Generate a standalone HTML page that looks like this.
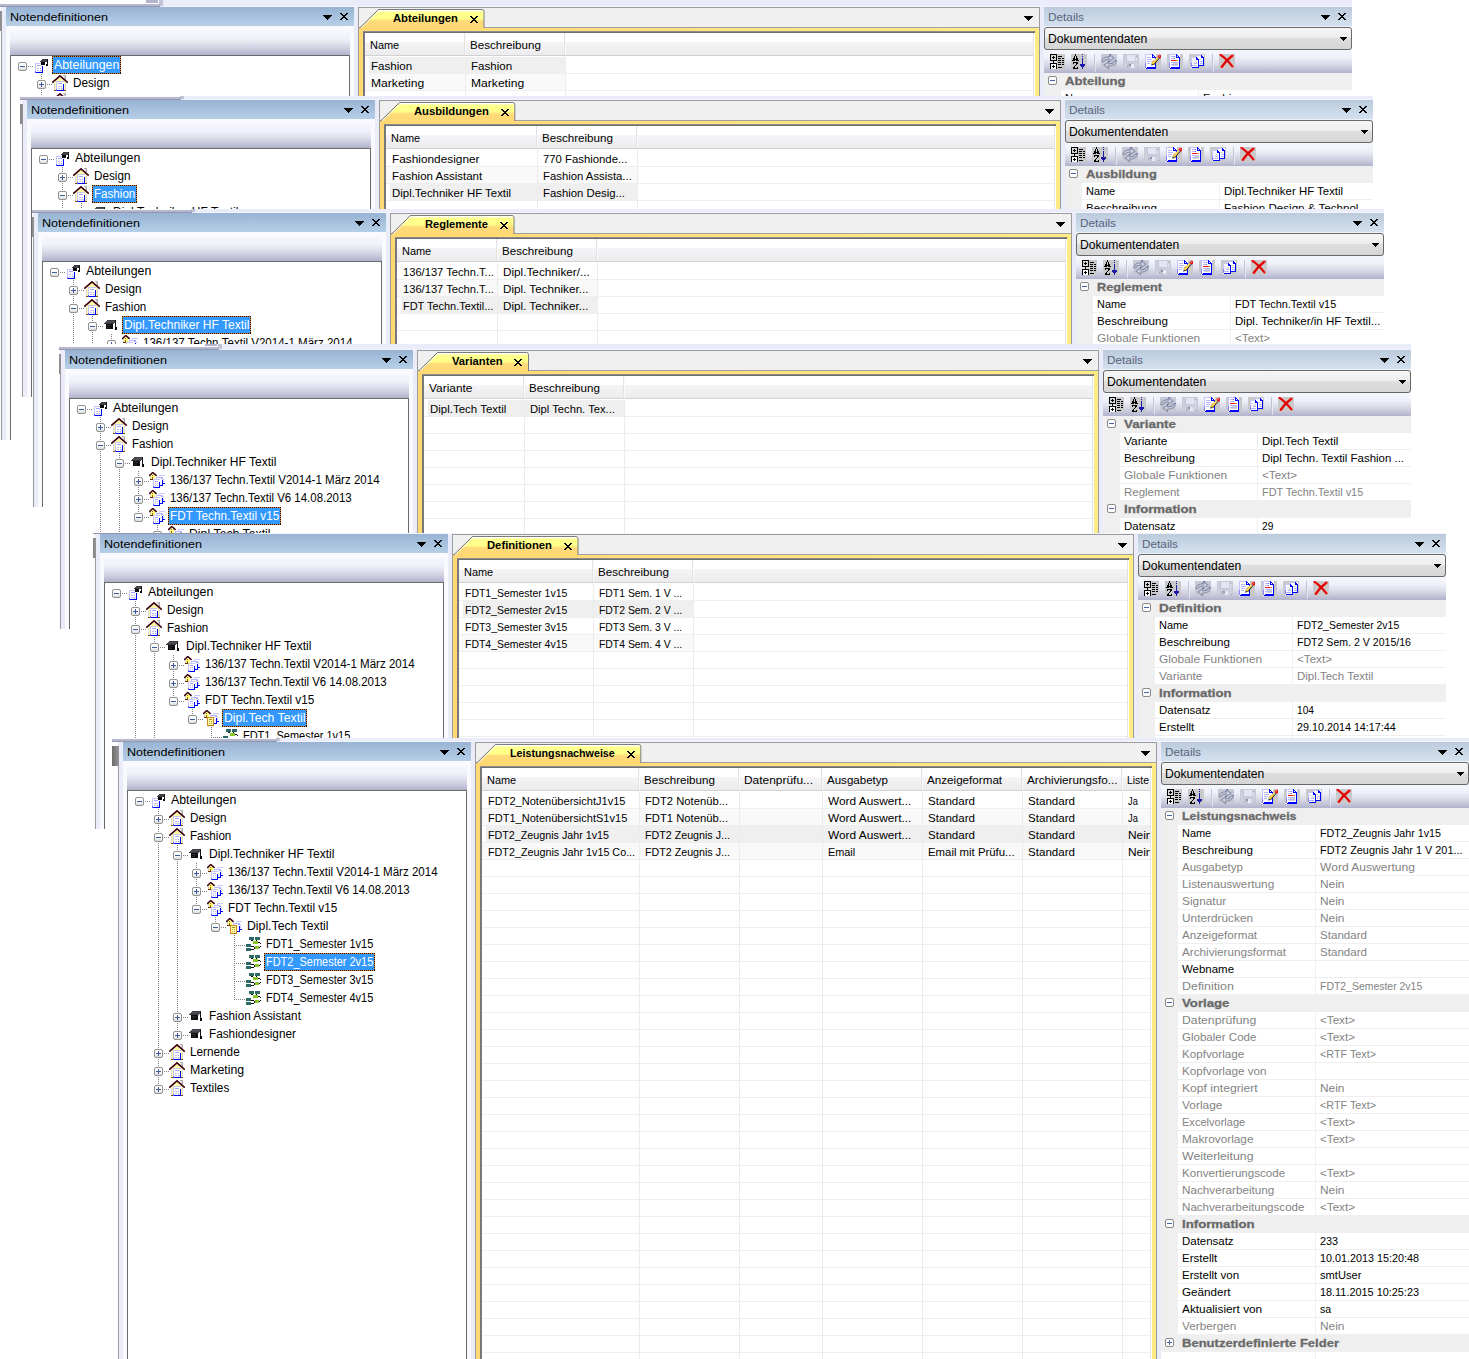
<!DOCTYPE html><html><head><meta charset="utf-8"><title>Notendefinitionen</title>
<style>
html,body{margin:0;padding:0;background:#fff}
body{width:1469px;height:1359px;position:relative;overflow:hidden;font-family:"Liberation Sans", sans-serif}
.win{position:absolute;overflow:hidden;background:#fff}
.org{position:absolute;width:0;height:0}
.org div,.org svg{position:absolute}
.t{white-space:pre;} .t span{display:inline-block;transform-origin:0 50%;position:static}
.tree{font-size:12px} .hdr{font-size:11px} .combo{font-size:12px}
.tab{font-size:11px;font-weight:bold} .grid{font-size:11px} .prop{font-size:11px}
.cat{font-size:11px;font-weight:bold;-webkit-text-stroke:0.3px #6c6c6c}
.i{overflow:visible}
.hd{background:repeating-linear-gradient(90deg,#808080 0 1px,transparent 1px 2px)}
.vd{background:repeating-linear-gradient(180deg,#808080 0 1px,transparent 1px 2px)}
.eb{width:9px;height:9px;box-sizing:border-box;border:1px solid #919191;border-radius:2px;background:linear-gradient(#fff 0,#fafafa 50%,#dcdcdc 100%)}
.eb2{width:9px;height:9px;box-sizing:border-box;border:1px solid #8a8a8a;border-radius:2px;background:#fdfdfd}
.sel{background:repeating-linear-gradient(90deg,#1a1208 0 1px,#e8801c 1px 2px) 0 0/100% 1px no-repeat,repeating-linear-gradient(90deg,#1a1208 0 1px,#e8801c 1px 2px) 0 100%/100% 1px no-repeat,repeating-linear-gradient(180deg,#1a1208 0 1px,#e8801c 1px 2px) 0 0/1px 100% no-repeat,repeating-linear-gradient(180deg,#1a1208 0 1px,#e8801c 1px 2px) 100% 0/1px 100% no-repeat,#3399ff}
</style></head><body>
<svg width="0" height="0" style="position:absolute"><defs><symbol id="ic_root" viewBox="0 0 16 16"><g shape-rendering="crispEdges"><rect x="1" y="6" width="8" height="10" fill="#ffffff"/><rect x="6" y="13" width="2" height="2" fill="#e4e4e0"/><rect x="5" y="14" width="3" height="1" fill="#e4e4e0"/><rect x="1" y="6" width="8" height="1" fill="#c6c6ff"/><rect x="1" y="6" width="1" height="10" fill="#c6c6ff"/><rect x="8" y="9" width="1" height="7" fill="#0000ff"/><rect x="2" y="15" width="7" height="1" fill="#0000ff"/><rect x="1" y="14" width="1" height="2" fill="#6060ff"/><rect x="3" y="8" width="4" height="1" fill="#a4a4ff"/><rect x="3" y="11" width="2" height="1" fill="#c0c0f8"/><rect x="6" y="11" width="1" height="1" fill="#a4a4ff"/><rect x="3" y="13" width="2" height="1" fill="#c0c0f8"/><rect x="6" y="13" width="1" height="1" fill="#a4a4ff"/><rect x="8" y="2" width="6" height="1" fill="#3a3c40"/><rect x="7" y="3" width="7" height="1" fill="#44484c"/><rect x="6" y="4" width="7" height="1" fill="#3a3c40"/><rect x="7" y="5" width="4" height="3" fill="#0c0c0c"/><rect x="13" y="2" width="1" height="7" fill="#141414"/><rect x="12" y="7" width="2" height="2" fill="#0c0c0c"/></g></symbol>
<symbol id="ic_house" viewBox="0 0 16 16"><g shape-rendering="crispEdges"><rect x="12" y="1" width="2" height="4" fill="#d2d2d2"/><rect x="11" y="0" width="3" height="1" fill="#b4b4b4"/><rect x="13" y="1" width="1" height="4" fill="#a8a8a8"/></g><path d="M2.5 7.5 L8 2 L13.5 7.5 V16 H2.5 Z" fill="#ffffa2"/><path d="M2.5 8 V15 M13.5 8 V15" stroke="#d8d8e4" stroke-width="1"/><g shape-rendering="crispEdges"><rect x="4" y="6" width="8" height="10" fill="#fff"/><rect x="9" y="13" width="2" height="2" fill="#e2e2de"/><rect x="4" y="6" width="8" height="1" fill="#c6c6ff"/><rect x="4" y="6" width="1" height="10" fill="#c6c6ff"/><rect x="11" y="9" width="1" height="7" fill="#0000ff"/><rect x="5" y="15" width="7" height="1" fill="#0000ff"/><rect x="4" y="14" width="1" height="2" fill="#6060ff"/><rect x="6" y="8" width="4" height="1" fill="#a4a4ff"/><rect x="6" y="11" width="2" height="1" fill="#c0c0f8"/><rect x="9" y="11" width="1" height="1" fill="#a4a4ff"/><rect x="6" y="13" width="2" height="1" fill="#c0c0f8"/><rect x="9" y="13" width="1" height="1" fill="#a4a4ff"/><rect x="2" y="15" width="2" height="1" fill="#8a4a08"/><rect x="12" y="15" width="2" height="1" fill="#8a4a08"/></g><path d="M0.2 7.7 L8 0.9 L15.8 7.7" stroke="#3c000c" stroke-width="1.7" fill="none"/></symbol>
<symbol id="ic_cap" viewBox="0 0 16 16"><g shape-rendering="crispEdges"><rect x="3" y="3" width="9" height="1" fill="#3c3e42"/><rect x="2" y="4" width="10" height="1" fill="#50545a"/><rect x="1" y="5" width="10" height="1" fill="#46484e"/><rect x="0" y="6" width="10" height="1" fill="#3a3c40"/><rect x="2" y="7" width="7" height="5" fill="#0e0e0e"/><rect x="3" y="8" width="4" height="1" fill="#2c2c2c"/><rect x="3" y="10" width="3" height="1" fill="#262626"/><rect x="11" y="3" width="1" height="10" fill="#161616"/><rect x="11" y="10" width="2" height="3" fill="#0c0c0c"/></g></symbol>
<symbol id="ic_regl" viewBox="0 0 16 16"><g shape-rendering="crispEdges"><rect x="10" y="3" width="6" height="1" fill="#c8c8ff"/><rect x="10" y="3" width="1" height="2" fill="#d4d4ff"/><rect x="7" y="5" width="7" height="1" fill="#b8b8ff"/><rect x="7" y="5" width="1" height="2" fill="#c8c8ff"/><rect x="12" y="6" width="2" height="1" fill="#a0a0ff"/><rect x="11" y="7" width="2" height="6" fill="#f4f4ff"/><rect x="13" y="8" width="1" height="6" fill="#0000ff"/><rect x="11" y="13" width="3" height="1" fill="#0000ff"/><rect x="13" y="11" width="3" height="1" fill="#0000ff"/><rect x="14" y="7" width="1" height="1" fill="#b0b0ff"/><rect x="14" y="9" width="1" height="1" fill="#b0b0ff"/><rect x="4" y="7" width="7" height="9" fill="#ffffff"/><rect x="4" y="7" width="7" height="1" fill="#c6c6ff"/><rect x="4" y="7" width="1" height="9" fill="#c6c6ff"/><rect x="10" y="10" width="1" height="6" fill="#0000ff"/><rect x="5" y="15" width="6" height="1" fill="#0000ff"/><rect x="4" y="14" width="1" height="2" fill="#6060ff"/><rect x="6" y="9" width="3" height="1" fill="#a4a4ff"/><rect x="6" y="11" width="1" height="1" fill="#b8b8ff"/><rect x="8" y="11" width="1" height="1" fill="#b8b8ff"/><rect x="6" y="13" width="1" height="1" fill="#b8b8ff"/><rect x="8" y="13" width="1" height="1" fill="#b8b8ff"/></g><path d="M2.5 3.5 L4 2 L5.5 3.5 V7 H2.5 Z" fill="#ffff70"/><g shape-rendering="crispEdges"><rect x="2" y="3" width="4" height="4" fill="#ffff78"/><rect x="1" y="3" width="1" height="4" fill="#d0d0d8"/><rect x="3" y="3" width="1" height="1" fill="#b05a10"/><rect x="3" y="5" width="1" height="2" fill="#b05a10"/><rect x="1" y="7" width="3" height="1" fill="#6a2a08"/></g><path d="M0.1 3.9 L3.75 0.5 L7.6 3.9" stroke="#3c000c" stroke-width="1.5" fill="none"/></symbol>
<symbol id="ic_vari" viewBox="0 0 16 16"><g shape-rendering="crispEdges"><rect x="10" y="3" width="6" height="1" fill="#c8c8ff"/><rect x="10" y="3" width="1" height="2" fill="#d4d4ff"/><rect x="7" y="5" width="7" height="1" fill="#b8b8ff"/><rect x="7" y="5" width="1" height="2" fill="#c8c8ff"/><rect x="12" y="6" width="2" height="1" fill="#a0a0ff"/><rect x="11" y="7" width="2" height="6" fill="#f4f4ff"/><rect x="13" y="8" width="1" height="6" fill="#0000ff"/><rect x="11" y="13" width="3" height="1" fill="#0000ff"/><rect x="13" y="11" width="3" height="1" fill="#0000ff"/><rect x="14" y="7" width="1" height="1" fill="#b0b0ff"/><rect x="14" y="9" width="1" height="1" fill="#b0b0ff"/><rect x="4" y="7" width="7" height="9" fill="#ffffa0"/><rect x="4" y="7" width="7" height="1" fill="#d88420"/><rect x="4" y="7" width="1" height="9" fill="#d88420"/><rect x="10" y="7" width="1" height="9" fill="#d88420"/><rect x="4" y="15" width="7" height="1" fill="#c87818"/><rect x="6" y="9" width="1" height="1" fill="#70c030"/><rect x="7" y="9" width="1" height="1" fill="#c06020"/><rect x="8" y="9" width="1" height="1" fill="#a8a030"/><rect x="6" y="11" width="1" height="1" fill="#b0a838"/><rect x="8" y="11" width="1" height="1" fill="#b09848"/><rect x="6" y="13" width="1" height="1" fill="#e8a070"/><rect x="8" y="13" width="1" height="1" fill="#70c838"/></g><path d="M2.5 3.5 L4 2 L5.5 3.5 V7 H2.5 Z" fill="#ffff70"/><g shape-rendering="crispEdges"><rect x="2" y="3" width="4" height="4" fill="#ffff78"/><rect x="1" y="3" width="1" height="4" fill="#d0d0d8"/><rect x="3" y="3" width="1" height="1" fill="#b05a10"/><rect x="3" y="5" width="1" height="2" fill="#b05a10"/><rect x="1" y="7" width="3" height="1" fill="#6a2a08"/></g><path d="M0.1 3.9 L3.75 0.5 L7.6 3.9" stroke="#3c000c" stroke-width="1.5" fill="none"/></symbol>
<symbol id="ic_defi" viewBox="0 0 16 16"><g shape-rendering="crispEdges"><rect x="3" y="1" width="5" height="3" fill="#2b6b60"/><rect x="9" y="1" width="5" height="3" fill="#2b6b60"/><rect x="5" y="1" width="1" height="1" fill="#2a5a90"/><rect x="11" y="1" width="1" height="1" fill="#2a5a90"/><rect x="7" y="5" width="5" height="3" fill="#86c626"/><rect x="5" y="4" width="2" height="1" fill="#0a0a0a"/><rect x="10" y="4" width="1" height="1" fill="#0a0a0a"/><rect x="12" y="6" width="2" height="1" fill="#0a0a0a"/><rect x="14" y="7" width="1" height="1" fill="#0a0a0a"/><rect x="0" y="8" width="5" height="3" fill="#2b6b60"/><rect x="2" y="8" width="1" height="1" fill="#2a5a90"/><rect x="0" y="12" width="5" height="3" fill="#2b6b60"/><rect x="2" y="12" width="1" height="1" fill="#2a5a90"/><rect x="9" y="10" width="4" height="3" fill="#86c626"/><rect x="5" y="10" width="3" height="1" fill="#0a0a0a"/><rect x="5" y="13" width="3" height="1" fill="#0a0a0a"/><rect x="8" y="11" width="1" height="2" fill="#0a0a0a"/><rect x="14" y="10" width="1" height="1" fill="#0a0a0a"/><rect x="13" y="11" width="1" height="1" fill="#0a0a0a"/></g></symbol>
<symbol id="ic_cat" viewBox="0 0 16 16"><g shape-rendering="crispEdges"><rect x="8" y="0" width="8" height="15" fill="#c9c9cb"/><rect x="1" y="0" width="7" height="1" fill="#000000"/><rect x="1" y="6" width="7" height="1" fill="#000000"/><rect x="1" y="0" width="1" height="7" fill="#000000"/><rect x="7" y="0" width="1" height="7" fill="#000000"/><rect x="2" y="1" width="5" height="5" fill="#d6d6d6"/><rect x="3" y="3" width="3" height="1" fill="#000000"/><rect x="4" y="2" width="1" height="3" fill="#000000"/><rect x="4" y="7" width="1" height="2" fill="#000000"/><rect x="0" y="7" width="4" height="1" fill="#e0e0e4"/><rect x="5" y="7" width="3" height="1" fill="#e0e0e4"/><rect x="1" y="9" width="7" height="1" fill="#000000"/><rect x="1" y="9" width="1" height="6" fill="#000000"/><rect x="7" y="9" width="1" height="6" fill="#000000"/><rect x="2" y="10" width="5" height="5" fill="#ffffff"/><rect x="3" y="12" width="3" height="1" fill="#000000"/><rect x="4" y="11" width="1" height="3" fill="#000000"/><rect x="9" y="2" width="4" height="1" fill="#000000"/><rect x="9" y="13" width="4" height="1" fill="#000000"/><rect x="9" y="4" width="3" height="1" fill="#000000"/><rect x="13" y="4" width="2" height="1" fill="#000000"/><rect x="9" y="6" width="3" height="1" fill="#000000"/><rect x="13" y="6" width="2" height="1" fill="#000000"/><rect x="9" y="8" width="3" height="1" fill="#000000"/><rect x="13" y="8" width="2" height="1" fill="#000000"/><rect x="9" y="10" width="3" height="1" fill="#000000"/><rect x="13" y="10" width="2" height="1" fill="#000000"/></g></symbol>
<symbol id="ic_az" viewBox="0 0 16 16"><g shape-rendering="crispEdges"><rect x="0" y="0" width="16" height="15" fill="#c9c9cb"/><rect x="4" y="0" width="1" height="1" fill="#000000"/><rect x="4" y="1" width="1" height="1" fill="#000000"/><rect x="3" y="2" width="1" height="1" fill="#000000"/><rect x="5" y="2" width="1" height="1" fill="#000000"/><rect x="3" y="3" width="1" height="1" fill="#000000"/><rect x="5" y="3" width="1" height="1" fill="#000000"/><rect x="2" y="4" width="1" height="1" fill="#000000"/><rect x="3" y="4" width="1" height="1" fill="#000000"/><rect x="5" y="4" width="1" height="1" fill="#000000"/><rect x="6" y="4" width="1" height="1" fill="#000000"/><rect x="2" y="5" width="1" height="1" fill="#000000"/><rect x="3" y="5" width="1" height="1" fill="#000000"/><rect x="4" y="5" width="1" height="1" fill="#000000"/><rect x="5" y="5" width="1" height="1" fill="#000000"/><rect x="6" y="5" width="1" height="1" fill="#000000"/><rect x="1" y="6" width="1" height="1" fill="#000000"/><rect x="2" y="6" width="1" height="1" fill="#000000"/><rect x="3" y="6" width="1" height="1" fill="#000000"/><rect x="5" y="6" width="1" height="1" fill="#000000"/><rect x="6" y="6" width="1" height="1" fill="#000000"/><rect x="7" y="6" width="1" height="1" fill="#000000"/><rect x="2" y="8" width="1" height="1" fill="#000000"/><rect x="3" y="8" width="1" height="1" fill="#000000"/><rect x="4" y="8" width="1" height="1" fill="#000000"/><rect x="5" y="8" width="1" height="1" fill="#000000"/><rect x="6" y="8" width="1" height="1" fill="#000000"/><rect x="2" y="9" width="1" height="1" fill="#000000"/><rect x="5" y="9" width="1" height="1" fill="#000000"/><rect x="6" y="9" width="1" height="1" fill="#000000"/><rect x="5" y="10" width="1" height="1" fill="#000000"/><rect x="4" y="11" width="1" height="1" fill="#000000"/><rect x="3" y="12" width="1" height="1" fill="#000000"/><rect x="2" y="13" width="1" height="1" fill="#000000"/><rect x="3" y="13" width="1" height="1" fill="#000000"/><rect x="6" y="13" width="1" height="1" fill="#000000"/><rect x="2" y="14" width="1" height="1" fill="#000000"/><rect x="3" y="14" width="1" height="1" fill="#000000"/><rect x="4" y="14" width="1" height="1" fill="#000000"/><rect x="5" y="14" width="1" height="1" fill="#000000"/><rect x="6" y="14" width="1" height="1" fill="#000000"/><rect x="11" y="0" width="1" height="1" fill="#1a1aa6"/><rect x="11" y="2" width="1" height="1" fill="#1a1aa6"/><rect x="11" y="4" width="1" height="10" fill="#1a1aa6"/><rect x="9" y="10" width="5" height="1" fill="#1a1aa6"/><rect x="9" y="11" width="5" height="1" fill="#1a1aa6"/><rect x="10" y="12" width="3" height="1" fill="#1a1aa6"/><rect x="11" y="13" width="1" height="2" fill="#1a1aa6"/></g></symbol>
<symbol id="ic_refresh" viewBox="0 0 16 16"><g shape-rendering="crispEdges"><rect x="0" y="0" width="16" height="15" fill="#c7c9d7"/></g><path d="M1 7.5 C1 4.2 4 2.8 8.5 2.9 L8.5 0.6 L13 4.2 L8.5 7.4 L8.5 5.2 C5.5 5 3.6 5.8 2.6 7.8 Z" fill="#cfd2e0" stroke="#9094aa" stroke-width="1.2"/><path d="M15 6.5 C15.2 10.4 12 12.2 7.5 12.1 L7.5 14.6 L3 11 L7.5 7.8 L7.5 9.9 C10.5 10 12.6 9.3 13.4 6.8 Z" fill="#cfd2e0" stroke="#9094aa" stroke-width="1.2"/><rect x="7" y="2" width="1" height="1" fill="#5a86c8"/><rect x="15" y="6" width="1" height="1" fill="#4a80d0"/><rect x="7" y="7" width="1" height="1" fill="#5050b0"/><rect x="10" y="9" width="1" height="1" fill="#5a86c8"/><rect x="9" y="0" width="1" height="1" fill="#5a52a8"/></symbol>
<symbol id="ic_save" viewBox="0 0 16 16"><g shape-rendering="crispEdges"><rect x="0" y="0" width="16" height="15" fill="#c7c9d7"/><rect x="1" y="1" width="14" height="13" fill="#cdcfdd"/><rect x="3" y="1" width="9" height="6" fill="#e3e5f2"/><rect x="3" y="1" width="1" height="6" fill="#c2c4d4"/><rect x="3" y="7" width="9" height="1" fill="#c4c6d6"/><rect x="13" y="2" width="1" height="1" fill="#9a9cb4"/><rect x="13" y="3" width="1" height="4" fill="#dfe1ee"/><rect x="4" y="9" width="7" height="5" fill="#c2c4d3"/><rect x="8" y="10" width="3" height="4" fill="#e8eaf4"/><rect x="6" y="10" width="2" height="2" fill="#8e90b0"/><rect x="4" y="12" width="1" height="1" fill="#9a9cb8"/><rect x="14" y="13" width="1" height="1" fill="#9698b4"/></g></symbol>
<symbol id="ic_edit" viewBox="0 0 16 16"><g shape-rendering="crispEdges"><rect x="9" y="0" width="7" height="15" fill="#c9c9cb"/><rect x="0" y="0" width="11" height="15" fill="#ffffff"/><rect x="0" y="0" width="8" height="1" fill="#c6c6ff"/><rect x="0" y="0" width="1" height="13" fill="#c6c6ff"/><rect x="0" y="9" width="1" height="5" fill="#8080ff"/><rect x="7" y="0" width="1" height="3" fill="#0000ff"/><rect x="8" y="1" width="1" height="3" fill="#0000ff"/><rect x="9" y="2" width="1" height="2" fill="#0000ff"/><rect x="10" y="3" width="1" height="12" fill="#0000ff"/><rect x="7" y="3" width="3" height="1" fill="#0000ff"/><rect x="8" y="2" width="1" height="1" fill="#ffffff"/><rect x="1" y="13" width="10" height="2" fill="#0000ff"/><rect x="1" y="13" width="1" height="1" fill="#ffffff"/><rect x="2" y="3" width="4" height="1" fill="#b4b4ff"/><rect x="2" y="5" width="5" height="1" fill="#b4b4ff"/><rect x="2" y="7" width="4" height="1" fill="#b4b4ff"/><rect x="2" y="9" width="3" height="1" fill="#b4b4ff"/></g><path d="M7.3 10.3 L14 2.6" stroke="#f0c030" stroke-width="2.6"/><path d="M7.6 9.2 L13.4 2.6" stroke="#fff8a0" stroke-width="1"/><path d="M8.6 11 L14.4 4" stroke="#181818" stroke-width="0.9"/><path d="M7 8.6 L8.2 7.4 M8 7.6 L9 6.4" stroke="#d08020" stroke-width="1"/><circle cx="14.6" cy="2.6" r="1.9" fill="#e81818"/><circle cx="14" cy="2" r="0.8" fill="#ff8080"/><path d="M12.6 3.6 L14 5" stroke="#4090e0" stroke-width="1"/><path d="M6 11.6 L6.8 9.6 L8.6 11 Z" fill="#222"/><rect x="6" y="10" width="1" height="1" fill="#50a0f0"/></symbol>
<symbol id="ic_doc" viewBox="0 0 16 16"><g shape-rendering="crispEdges"><rect x="0" y="0" width="16" height="15" fill="#c9c9cb"/><rect x="2" y="0" width="11" height="15" fill="#ffffff"/><rect x="2" y="0" width="8" height="1" fill="#c6c6ff"/><rect x="2" y="0" width="1" height="13" fill="#c6c6ff"/><rect x="2" y="9" width="1" height="5" fill="#8080ff"/><rect x="9" y="0" width="1" height="3" fill="#0000ff"/><rect x="10" y="1" width="1" height="3" fill="#0000ff"/><rect x="11" y="2" width="1" height="2" fill="#0000ff"/><rect x="12" y="3" width="1" height="12" fill="#0000ff"/><rect x="9" y="3" width="3" height="1" fill="#0000ff"/><rect x="10" y="2" width="1" height="1" fill="#ffffff"/><rect x="3" y="13" width="10" height="2" fill="#0000ff"/><rect x="3" y="13" width="1" height="1" fill="#ffffff"/><rect x="4" y="2" width="3" height="1" fill="#b4b4ff"/><rect x="7" y="2" width="1" height="1" fill="#7070f0"/><rect x="4" y="4" width="3" height="1" fill="#b4b4ff"/><rect x="7" y="4" width="1" height="1" fill="#7070f0"/><rect x="4" y="6" width="5" height="1" fill="#f01414"/><rect x="9" y="6" width="2" height="1" fill="#f08018"/><rect x="4" y="8" width="7" height="1" fill="#b4b4ff"/><rect x="6" y="9" width="5" height="1" fill="#d4d4d0"/><rect x="4" y="10" width="7" height="1" fill="#b4b4ff"/><rect x="5" y="11" width="6" height="1" fill="#d4d4d0"/></g></symbol>
<symbol id="ic_copy" viewBox="0 0 16 16"><g shape-rendering="crispEdges"><rect x="0" y="0" width="16" height="15" fill="#c9c9cb"/><rect x="7" y="1" width="8" height="11" fill="#ffffff"/><rect x="7" y="1" width="5" height="1" fill="#c6c6ff"/><rect x="7" y="1" width="1" height="6" fill="#c6c6ff"/><rect x="12" y="1" width="1" height="2" fill="#0000ff"/><rect x="13" y="2" width="1" height="2" fill="#0000ff"/><rect x="14" y="3" width="1" height="9" fill="#0000ff"/><rect x="12" y="3" width="2" height="1" fill="#0000ff"/><rect x="9" y="11" width="6" height="1" fill="#0000ff"/><rect x="10" y="5" width="3" height="1" fill="#dcdcc8"/><rect x="11" y="7" width="3" height="1" fill="#b4b4ff"/><rect x="11" y="9" width="3" height="1" fill="#b4b4ff"/><rect x="2" y="3" width="8" height="11" fill="#ffffff"/><rect x="2" y="3" width="6" height="1" fill="#c6c6ff"/><rect x="2" y="3" width="1" height="10" fill="#c6c6ff"/><rect x="2" y="9" width="1" height="4" fill="#8080ff"/><rect x="7" y="3" width="1" height="2" fill="#0000ff"/><rect x="8" y="4" width="1" height="2" fill="#0000ff"/><rect x="9" y="5" width="1" height="9" fill="#0000ff"/><rect x="7" y="5" width="2" height="1" fill="#0000ff"/><rect x="3" y="13" width="7" height="1" fill="#0000ff"/><rect x="3" y="6" width="3" height="1" fill="#e0e0ff"/><rect x="3" y="8" width="4" height="1" fill="#e0e0ff"/><rect x="5" y="9" width="3" height="1" fill="#b4b4ff"/><rect x="3" y="11" width="5" height="1" fill="#b4b4ff"/><rect x="6" y="7" width="2" height="2" fill="#e4e4d4"/></g></symbol>
<symbol id="ic_del" viewBox="0 0 16 16"><g shape-rendering="crispEdges"><rect x="0" y="0" width="16" height="15" fill="#c9c9cb"/></g><path d="M1.6 0.9 C5 3.2 9.5 7.5 13.4 12.4" stroke="#f40808" stroke-width="2.3" fill="none" stroke-linecap="round"/><path d="M13.3 1.8 C9.5 4.6 5.5 8.5 2.8 12.8" stroke="#f40808" stroke-width="2.5" fill="none" stroke-linecap="round"/><path d="M3 2 C6 4.5 9.5 8 12.6 11.6 M12.4 2.8 C9 5.5 5.8 8.6 3.4 12" stroke="#b80000" stroke-width="0.8" fill="none"/></symbol>
</defs></svg>
<div class="win" style="left:0px;top:0px;width:1352px;height:440px">
<div class="org" style="left:-1px;top:6px">
<div style="left:0px;top:-6px;width:1353px;height:440px;background:#ebecf9"></div>
<div style="left:0px;top:1px;width:2px;height:434px;background:#fbfbff"></div>
<div style="left:-4px;top:-6px;width:164px;height:4px;background:#fdfdfe"></div>
<div style="left:147px;top:-6px;width:12px;height:3px;background:#b3b4cb"></div>
<div style="left:160px;top:-6px;width:4px;height:6px;background:#c1c2d7"></div>
<div style="left:-4px;top:-2px;width:166px;height:2px;background:#b7b8cf"></div>
<div style="left:-4px;top:0px;width:165px;height:1px;background:#9597af"></div>
<div style="left:161px;top:-2px;width:3px;height:2px;background:#c1c2d7"></div>
<div style="left:165px;top:0px;width:1188px;height:1px;background:#f4f5fc"></div>
<div style="left:-4px;top:5px;width:7px;height:20px;background:linear-gradient(90deg,#6c6c6c,#969696)"></div>
<div style="left:2px;top:25px;width:1px;height:434px;background:#9c9c9c"></div>
<div style="left:7px;top:20px;width:348px;height:434px;background:#f9f9fe"></div>
<div style="left:7px;top:1px;width:348px;height:19px;background:linear-gradient(#98b3d3,#b6cfe8)"></div>
<div class="t hdr" style="left:10.9px;top:2px;height:19px;line-height:19px;color:#000;"><span style="transform:scaleX(1.1445)">Notendefinitionen</span></div>
<svg class="i" style="left:324px;top:9px" width="9" height="5" shape-rendering="crispEdges"><path fill="#000" d="M0 0h9v1h-9zM1 1h7v1h-7zM2 2h5v1h-5zM3 3h3v1h-3zM4 4h1v1h-1z"/></svg>
<svg class="i" style="left:341px;top:7px" width="8" height="7" shape-rendering="crispEdges"><path fill="#000" d="M0 0h2v1h-2zM6 0h2v1h-2zM1 1h2v1h-2zM5 1h2v1h-2zM2 2h4v1h-4zM3 3h2v1h-2zM2 4h4v1h-4zM1 5h2v1h-2zM5 5h2v1h-2zM0 6h2v1h-2zM6 6h2v1h-2z"/></svg>
<div style="left:11px;top:25px;width:340px;height:24px;background:linear-gradient(#f4f6fc 0,#f0f2fa 30%,#e1e2ee 52%,#cfd0e0 72%,#b1b2cc 100%)"></div>
<div style="left:11px;top:49px;width:340px;height:434px;background:#fff;border:1px solid #6a6a6a;box-sizing:border-box"></div>
<div class="hd" style="left:29px;top:60px;width:6px;height:1px;"></div>
<div class="eb" style="left:19px;top:56px"><div style="left:1px;top:3px;width:5px;height:1px;background:#3c5a9e"></div></div>
<svg class="i" style="left:35px;top:51px" width="16" height="16"><use href="#ic_root"/></svg>
<div class="sel" style="left:53px;top:50px;width:69px;height:18px;"></div>
<div class="t tree" style="left:54.6px;top:50px;height:18px;line-height:18px;color:#fff;"><span style="transform:scaleX(1.0301)">Abteilungen</span></div>
<div class="hd" style="left:48px;top:78px;width:5px;height:1px;"></div>
<div class="vd" style="left:42px;top:68px;width:1px;height:5px;"></div>
<div class="eb" style="left:38px;top:74px"><div style="left:1px;top:3px;width:5px;height:1px;background:#3c5a9e"></div><div style="left:3px;top:1px;width:1px;height:5px;background:#3c5a9e"></div></div>
<svg class="i" style="left:53px;top:69px" width="16" height="16"><use href="#ic_house"/></svg>
<div class="t tree" style="left:73.6px;top:68px;height:18px;line-height:18px;color:#000;"><span style="transform:scaleX(0.977)">Design</span></div>
<div class="hd" style="left:48px;top:96px;width:5px;height:1px;"></div>
<div class="vd" style="left:42px;top:84px;width:1px;height:7px;"></div>
<div class="eb" style="left:38px;top:92px"><div style="left:1px;top:3px;width:5px;height:1px;background:#3c5a9e"></div></div>
<svg class="i" style="left:53px;top:87px" width="16" height="16"><use href="#ic_house"/></svg>
<div class="t tree" style="left:73.6px;top:86px;height:18px;line-height:18px;color:#000;"><span style="transform:scaleX(0.9671)">Fashion</span></div>
<div class="vd" style="left:42px;top:102px;width:1px;height:42px;"></div>
<div class="vd" style="left:61px;top:104px;width:1px;height:40px;"></div>
<div style="left:359px;top:1px;width:682px;height:434px;background:#f0f0f0;border:1px solid #9c9c9c;border-bottom:0;box-sizing:border-box"></div>
<div style="left:360px;top:21px;width:680px;height:1px;background:#a0a0a0"></div>
<div style="left:360px;top:22px;width:680px;height:434px;background:linear-gradient(90deg,#ffd873,#ffe27c 50%,#ffeb84)"></div>
<svg class="i" style="left:360px;top:2px" width="127" height="21"><defs><linearGradient id="tg" x1="0" y1="0" x2="0" y2="1"><stop offset="0.07" stop-color="#ffffff"/><stop offset="0.12" stop-color="#ffff8e"/><stop offset="0.46" stop-color="#ffff8a"/><stop offset="0.53" stop-color="#ffea80"/><stop offset="0.60" stop-color="#ffda79"/><stop offset="1" stop-color="#ffd873"/></linearGradient></defs><path d="M0.5 20.5 L19.5 1.5 H123.0 Q125.0 1.5 125.0 3.5 V21 H0.5 Z" fill="url(#tg)"/><path d="M1.9 20 L20.3 2.6" stroke="#fff" stroke-width="0.9" fill="none"/><path d="M19.5 1.5 H123.0 Q125.0 1.5 125.0 3.5 V20" stroke="#7c7c7c" stroke-width="1" fill="none"/><path d="M0.6 20.1 L19.6 1.4" stroke="#505050" stroke-width="0.8" fill="none"/></svg>
<div class="t tab" style="left:394px;top:4px;height:17px;line-height:17px;color:#000;"><span style="transform:scaleX(1.0226)">Abteilungen</span></div>
<svg class="i" style="left:471px;top:10px" width="8" height="7" shape-rendering="crispEdges"><path fill="#000" d="M0 0h2v1h-2zM6 0h2v1h-2zM1 1h2v1h-2zM5 1h2v1h-2zM2 2h4v1h-4zM3 3h2v1h-2zM2 4h4v1h-4zM1 5h2v1h-2zM5 5h2v1h-2zM0 6h2v1h-2zM6 6h2v1h-2z"/></svg>
<svg class="i" style="left:1025px;top:10px" width="9" height="5" shape-rendering="crispEdges"><path fill="#000" d="M0 0h9v1h-9zM1 1h7v1h-7zM2 2h5v1h-5zM3 3h3v1h-3zM4 4h1v1h-1z"/></svg>
<div style="left:364px;top:25px;width:672px;height:434px;background:#fff;border-left:2px solid #787878;border-top:2px solid #6e6e6e;box-sizing:border-box"></div>
<div style="left:364px;top:25px;width:671px;height:1px;background:#8c8c8c"></div>
<div style="left:1034px;top:27px;width:1px;height:434px;background:#e2e2e2"></div>
<div style="left:366px;top:27px;width:668px;height:9px;background:#fff"></div>
<div style="left:366px;top:36px;width:668px;height:13px;background:linear-gradient(#f5f5f7,#ececef)"></div>
<div style="left:366px;top:49px;width:668px;height:1px;background:#d2d2d2"></div>
<div style="left:366px;top:67px;width:668px;height:1px;background:#efefef"></div>
<div style="left:366px;top:84px;width:668px;height:1px;background:#efefef"></div>
<div style="left:366px;top:101px;width:668px;height:1px;background:#efefef"></div>
<div style="left:366px;top:118px;width:668px;height:1px;background:#efefef"></div>
<div style="left:366px;top:135px;width:668px;height:1px;background:#efefef"></div>
<div style="left:366px;top:152px;width:668px;height:1px;background:#efefef"></div>
<div style="left:366px;top:169px;width:668px;height:1px;background:#efefef"></div>
<div style="left:366px;top:186px;width:668px;height:1px;background:#efefef"></div>
<div style="left:366px;top:203px;width:668px;height:1px;background:#efefef"></div>
<div style="left:366px;top:220px;width:668px;height:1px;background:#efefef"></div>
<div style="left:366px;top:237px;width:668px;height:1px;background:#efefef"></div>
<div style="left:366px;top:254px;width:668px;height:1px;background:#efefef"></div>
<div style="left:366px;top:271px;width:668px;height:1px;background:#efefef"></div>
<div style="left:366px;top:288px;width:668px;height:1px;background:#efefef"></div>
<div style="left:366px;top:305px;width:668px;height:1px;background:#efefef"></div>
<div style="left:366px;top:322px;width:668px;height:1px;background:#efefef"></div>
<div style="left:366px;top:339px;width:668px;height:1px;background:#efefef"></div>
<div style="left:366px;top:356px;width:668px;height:1px;background:#efefef"></div>
<div style="left:366px;top:373px;width:668px;height:1px;background:#efefef"></div>
<div style="left:366px;top:390px;width:668px;height:1px;background:#efefef"></div>
<div style="left:366px;top:407px;width:668px;height:1px;background:#efefef"></div>
<div style="left:366px;top:424px;width:668px;height:1px;background:#efefef"></div>
<div style="left:366px;top:441px;width:668px;height:1px;background:#efefef"></div>
<div style="left:370px;top:51px;width:197px;height:16px;background:#efefef"></div>
<div style="left:366px;top:68px;width:201px;height:16px;background:#f9f9f9"></div>
<div style="left:465px;top:27px;width:1px;height:22px;background:#e3e3e6"></div>
<div style="left:466px;top:27px;width:1px;height:22px;background:#fbfbfd"></div>
<div style="left:466px;top:51px;width:1px;height:434px;background:#ececec"></div>
<div style="left:565px;top:27px;width:1px;height:22px;background:#e3e3e6"></div>
<div style="left:566px;top:27px;width:1px;height:22px;background:#fbfbfd"></div>
<div style="left:566px;top:51px;width:1px;height:434px;background:#ececec"></div>
<div class="t grid" style="left:370.5px;top:31px;height:16px;line-height:16px;color:#000;width:95px;overflow:hidden;"><span style="transform:scaleX(0.9951)">Name</span></div>
<div class="t grid" style="left:371.5px;top:52px;height:16px;line-height:16px;color:#000;width:94px;overflow:hidden;"><span style="transform:scaleX(1.0526)">Fashion</span></div>
<div class="t grid" style="left:371.5px;top:69px;height:16px;line-height:16px;color:#000;width:94px;overflow:hidden;"><span style="transform:scaleX(1.0995)">Marketing</span></div>
<div class="t grid" style="left:470.5px;top:31px;height:16px;line-height:16px;color:#000;width:95px;overflow:hidden;"><span style="transform:scaleX(1.0538)">Beschreibung</span></div>
<div class="t grid" style="left:471.5px;top:52px;height:16px;line-height:16px;color:#000;width:94px;overflow:hidden;"><span style="transform:scaleX(1.0526)">Fashion</span></div>
<div class="t grid" style="left:471.5px;top:69px;height:16px;line-height:16px;color:#000;width:94px;overflow:hidden;"><span style="transform:scaleX(1.0995)">Marketing</span></div>
<div style="left:1045px;top:1px;width:308px;height:19px;background:linear-gradient(#bccbdc,#d3e1ef)"></div>
<div class="t hdr" style="left:1048.5px;top:2px;height:19px;line-height:19px;color:#58647c;"><span style="transform:scaleX(1.0706)">Details</span></div>
<svg class="i" style="left:1322px;top:9px" width="9" height="5" shape-rendering="crispEdges"><path fill="#000" d="M0 0h9v1h-9zM1 1h7v1h-7zM2 2h5v1h-5zM3 3h3v1h-3zM4 4h1v1h-1z"/></svg>
<svg class="i" style="left:1339px;top:7px" width="8" height="7" shape-rendering="crispEdges"><path fill="#000" d="M0 0h2v1h-2zM6 0h2v1h-2zM1 1h2v1h-2zM5 1h2v1h-2zM2 2h4v1h-4zM3 3h2v1h-2zM2 4h4v1h-4zM1 5h2v1h-2zM5 5h2v1h-2zM0 6h2v1h-2zM6 6h2v1h-2z"/></svg>
<div style="left:1045px;top:20px;width:308px;height:1px;background:#eef1f8"></div>
<div style="left:1045px;top:21px;width:308px;height:23px;background:linear-gradient(#f6f6f6 0,#eeeeee 45%,#dedede 50%,#d6d6d6 100%);border:1px solid #686868;border-radius:3px;box-sizing:border-box"></div>
<div class="t combo" style="left:1048.5px;top:23px;height:21px;line-height:21px;color:#000;"><span style="transform:scaleX(1.0125)">Dokumentendaten</span></div>
<svg class="i" style="left:1341px;top:31px" width="7" height="4" shape-rendering="crispEdges"><path fill="#000" d="M0 0h7v1h-7zM1 1h5v1h-5zM2 2h3v1h-3zM3 3h1v1h-1z"/></svg>
<div style="left:1045px;top:44px;width:308px;height:23px;background:linear-gradient(#f5f6fc 0,#f0f2fa 30%,#e1e2ee 52%,#cfd0e0 72%,#b1b2cc 100%)"></div>
<svg class="i" style="left:1050px;top:48px" width="16" height="16"><use href="#ic_cat"/></svg>
<svg class="i" style="left:1072px;top:48px" width="16" height="16"><use href="#ic_az"/></svg>
<svg class="i" style="left:1102px;top:48px" width="16" height="16"><use href="#ic_refresh"/></svg>
<svg class="i" style="left:1124px;top:48px" width="16" height="16"><use href="#ic_save"/></svg>
<svg class="i" style="left:1146px;top:48px" width="16" height="16"><use href="#ic_edit"/></svg>
<svg class="i" style="left:1168px;top:48px" width="16" height="16"><use href="#ic_doc"/></svg>
<svg class="i" style="left:1190px;top:48px" width="16" height="16"><use href="#ic_copy"/></svg>
<svg class="i" style="left:1220px;top:48px" width="16" height="16"><use href="#ic_del"/></svg>
<div style="left:1095px;top:48px;width:1px;height:17px;background:#c4c5d2"></div>
<div style="left:1096px;top:49px;width:1px;height:17px;background:#f4f4fa;opacity:.6"></div>
<div style="left:1213px;top:48px;width:1px;height:17px;background:#c4c5d2"></div>
<div style="left:1214px;top:49px;width:1px;height:17px;background:#f4f4fa;opacity:.6"></div>
<div style="left:1045px;top:67px;width:308px;height:434px;background:#fff"></div>
<div style="left:1045px;top:67px;width:17px;height:34px;background:#efefef"></div>
<div style="left:1045px;top:67px;width:308px;height:17px;background:#efefef"></div>
<div class="eb2" style="left:1049px;top:70px"><div style="left:1px;top:3px;width:5px;height:1px;background:#4a62a8"></div></div>
<div class="t cat" style="left:1066px;top:67px;height:17px;line-height:17px;color:#686868;"><span style="transform:scaleX(1.1948)">Abteilung</span></div>
<div style="left:1062px;top:100px;width:291px;height:1px;background:#efefef"></div>
<div style="left:1199px;top:84px;width:1px;height:17px;background:#efefef"></div>
<div class="t prop" style="left:1066.2px;top:84px;height:16px;line-height:16px;color:#000;"><span style="transform:scaleX(0.9951)">Name</span></div>
<div class="t prop" style="left:1204px;top:84px;height:16px;line-height:16px;color:#000;width:149px;overflow:hidden;"><span style="transform:scaleX(1.0526)">Fashion</span></div>
</div></div>
<div class="win" style="left:20px;top:96px;width:1353px;height:301px">
<div class="org" style="left:0px;top:3px">
<div style="left:0px;top:-3px;width:1353px;height:301px;background:#ebecf9"></div>
<div style="left:0px;top:1px;width:2px;height:298px;background:#fbfbff"></div>
<div style="left:-4px;top:-3px;width:164px;height:1px;background:#fdfdfe"></div>
<div style="left:160px;top:-3px;width:4px;height:3px;background:#c1c2d7"></div>
<div style="left:-4px;top:-2px;width:166px;height:2px;background:#b7b8cf"></div>
<div style="left:-4px;top:0px;width:165px;height:1px;background:#9597af"></div>
<div style="left:161px;top:-2px;width:3px;height:2px;background:#c1c2d7"></div>
<div style="left:165px;top:0px;width:1188px;height:1px;background:#f4f5fc"></div>
<div style="left:-4px;top:5px;width:7px;height:20px;background:linear-gradient(90deg,#6c6c6c,#969696)"></div>
<div style="left:2px;top:25px;width:1px;height:298px;background:#9c9c9c"></div>
<div style="left:7px;top:20px;width:348px;height:298px;background:#f9f9fe"></div>
<div style="left:7px;top:1px;width:348px;height:19px;background:linear-gradient(#98b3d3,#b6cfe8)"></div>
<div class="t hdr" style="left:10.9px;top:2px;height:19px;line-height:19px;color:#000;"><span style="transform:scaleX(1.1445)">Notendefinitionen</span></div>
<svg class="i" style="left:324px;top:9px" width="9" height="5" shape-rendering="crispEdges"><path fill="#000" d="M0 0h9v1h-9zM1 1h7v1h-7zM2 2h5v1h-5zM3 3h3v1h-3zM4 4h1v1h-1z"/></svg>
<svg class="i" style="left:341px;top:7px" width="8" height="7" shape-rendering="crispEdges"><path fill="#000" d="M0 0h2v1h-2zM6 0h2v1h-2zM1 1h2v1h-2zM5 1h2v1h-2zM2 2h4v1h-4zM3 3h2v1h-2zM2 4h4v1h-4zM1 5h2v1h-2zM5 5h2v1h-2zM0 6h2v1h-2zM6 6h2v1h-2z"/></svg>
<div style="left:11px;top:25px;width:340px;height:24px;background:linear-gradient(#f4f6fc 0,#f0f2fa 30%,#e1e2ee 52%,#cfd0e0 72%,#b1b2cc 100%)"></div>
<div style="left:11px;top:49px;width:340px;height:298px;background:#fff;border:1px solid #6a6a6a;box-sizing:border-box"></div>
<div class="hd" style="left:29px;top:60px;width:6px;height:1px;"></div>
<div class="eb" style="left:19px;top:56px"><div style="left:1px;top:3px;width:5px;height:1px;background:#3c5a9e"></div></div>
<svg class="i" style="left:35px;top:51px" width="16" height="16"><use href="#ic_root"/></svg>
<div class="t tree" style="left:54.6px;top:50px;height:18px;line-height:18px;color:#000;"><span style="transform:scaleX(1.0301)">Abteilungen</span></div>
<div class="hd" style="left:48px;top:78px;width:5px;height:1px;"></div>
<div class="vd" style="left:42px;top:68px;width:1px;height:5px;"></div>
<div class="eb" style="left:38px;top:74px"><div style="left:1px;top:3px;width:5px;height:1px;background:#3c5a9e"></div><div style="left:3px;top:1px;width:1px;height:5px;background:#3c5a9e"></div></div>
<svg class="i" style="left:53px;top:69px" width="16" height="16"><use href="#ic_house"/></svg>
<div class="t tree" style="left:73.6px;top:68px;height:18px;line-height:18px;color:#000;"><span style="transform:scaleX(0.977)">Design</span></div>
<div class="hd" style="left:48px;top:96px;width:5px;height:1px;"></div>
<div class="vd" style="left:42px;top:84px;width:1px;height:7px;"></div>
<div class="eb" style="left:38px;top:92px"><div style="left:1px;top:3px;width:5px;height:1px;background:#3c5a9e"></div></div>
<svg class="i" style="left:53px;top:87px" width="16" height="16"><use href="#ic_house"/></svg>
<div class="sel" style="left:72px;top:86px;width:45px;height:18px;"></div>
<div class="t tree" style="left:73.6px;top:86px;height:18px;line-height:18px;color:#fff;"><span style="transform:scaleX(0.9671)">Fashion</span></div>
<div class="hd" style="left:67px;top:114px;width:6px;height:1px;"></div>
<div class="vd" style="left:61px;top:104px;width:1px;height:5px;"></div>
<div class="eb" style="left:57px;top:110px"><div style="left:1px;top:3px;width:5px;height:1px;background:#3c5a9e"></div></div>
<svg class="i" style="left:73px;top:105px" width="16" height="16"><use href="#ic_cap"/></svg>
<div class="t tree" style="left:92.6px;top:104px;height:18px;line-height:18px;color:#000;"><span style="transform:scaleX(1.0019)">Dipl.Techniker HF Textil</span></div>
<div class="vd" style="left:42px;top:102px;width:1px;height:60px;"></div>
<div class="vd" style="left:61px;top:120px;width:1px;height:42px;"></div>
<div class="vd" style="left:80px;top:122px;width:1px;height:40px;"></div>
<div style="left:359px;top:1px;width:682px;height:298px;background:#f0f0f0;border:1px solid #9c9c9c;border-bottom:0;box-sizing:border-box"></div>
<div style="left:360px;top:21px;width:680px;height:1px;background:#a0a0a0"></div>
<div style="left:360px;top:22px;width:680px;height:298px;background:linear-gradient(90deg,#ffd873,#ffe27c 50%,#ffeb84)"></div>
<svg class="i" style="left:360px;top:2px" width="137" height="21"><defs><linearGradient id="tg" x1="0" y1="0" x2="0" y2="1"><stop offset="0.07" stop-color="#ffffff"/><stop offset="0.12" stop-color="#ffff8e"/><stop offset="0.46" stop-color="#ffff8a"/><stop offset="0.53" stop-color="#ffea80"/><stop offset="0.60" stop-color="#ffda79"/><stop offset="1" stop-color="#ffd873"/></linearGradient></defs><path d="M0.5 20.5 L19.5 1.5 H132.8 Q134.8 1.5 134.8 3.5 V21 H0.5 Z" fill="url(#tg)"/><path d="M1.9 20 L20.3 2.6" stroke="#fff" stroke-width="0.9" fill="none"/><path d="M19.5 1.5 H132.8 Q134.8 1.5 134.8 3.5 V20" stroke="#7c7c7c" stroke-width="1" fill="none"/><path d="M0.6 20.1 L19.6 1.4" stroke="#505050" stroke-width="0.8" fill="none"/></svg>
<div class="t tab" style="left:394px;top:4px;height:17px;line-height:17px;color:#000;"><span style="transform:scaleX(1.0201)">Ausbildungen</span></div>
<svg class="i" style="left:481px;top:10px" width="8" height="7" shape-rendering="crispEdges"><path fill="#000" d="M0 0h2v1h-2zM6 0h2v1h-2zM1 1h2v1h-2zM5 1h2v1h-2zM2 2h4v1h-4zM3 3h2v1h-2zM2 4h4v1h-4zM1 5h2v1h-2zM5 5h2v1h-2zM0 6h2v1h-2zM6 6h2v1h-2z"/></svg>
<svg class="i" style="left:1025px;top:10px" width="9" height="5" shape-rendering="crispEdges"><path fill="#000" d="M0 0h9v1h-9zM1 1h7v1h-7zM2 2h5v1h-5zM3 3h3v1h-3zM4 4h1v1h-1z"/></svg>
<div style="left:364px;top:25px;width:672px;height:298px;background:#fff;border-left:2px solid #787878;border-top:2px solid #6e6e6e;box-sizing:border-box"></div>
<div style="left:364px;top:25px;width:671px;height:1px;background:#8c8c8c"></div>
<div style="left:1034px;top:27px;width:1px;height:298px;background:#e2e2e2"></div>
<div style="left:366px;top:27px;width:668px;height:9px;background:#fff"></div>
<div style="left:366px;top:36px;width:668px;height:13px;background:linear-gradient(#f5f5f7,#ececef)"></div>
<div style="left:366px;top:49px;width:668px;height:1px;background:#d2d2d2"></div>
<div style="left:366px;top:67px;width:668px;height:1px;background:#efefef"></div>
<div style="left:366px;top:84px;width:668px;height:1px;background:#efefef"></div>
<div style="left:366px;top:101px;width:668px;height:1px;background:#efefef"></div>
<div style="left:366px;top:118px;width:668px;height:1px;background:#efefef"></div>
<div style="left:366px;top:135px;width:668px;height:1px;background:#efefef"></div>
<div style="left:366px;top:152px;width:668px;height:1px;background:#efefef"></div>
<div style="left:366px;top:169px;width:668px;height:1px;background:#efefef"></div>
<div style="left:366px;top:186px;width:668px;height:1px;background:#efefef"></div>
<div style="left:366px;top:203px;width:668px;height:1px;background:#efefef"></div>
<div style="left:366px;top:220px;width:668px;height:1px;background:#efefef"></div>
<div style="left:366px;top:237px;width:668px;height:1px;background:#efefef"></div>
<div style="left:366px;top:254px;width:668px;height:1px;background:#efefef"></div>
<div style="left:366px;top:271px;width:668px;height:1px;background:#efefef"></div>
<div style="left:366px;top:288px;width:668px;height:1px;background:#efefef"></div>
<div style="left:366px;top:305px;width:668px;height:1px;background:#efefef"></div>
<div style="left:366px;top:68px;width:252px;height:16px;background:#f9f9f9"></div>
<div style="left:370px;top:85px;width:248px;height:16px;background:#efefef"></div>
<div style="left:516px;top:27px;width:1px;height:22px;background:#e3e3e6"></div>
<div style="left:517px;top:27px;width:1px;height:22px;background:#fbfbfd"></div>
<div style="left:517px;top:51px;width:1px;height:298px;background:#ececec"></div>
<div style="left:616px;top:27px;width:1px;height:22px;background:#e3e3e6"></div>
<div style="left:617px;top:27px;width:1px;height:22px;background:#fbfbfd"></div>
<div style="left:617px;top:51px;width:1px;height:298px;background:#ececec"></div>
<div class="t grid" style="left:370.5px;top:31px;height:16px;line-height:16px;color:#000;width:146px;overflow:hidden;"><span style="transform:scaleX(0.9951)">Name</span></div>
<div class="t grid" style="left:371.5px;top:52px;height:16px;line-height:16px;color:#000;width:145px;overflow:hidden;"><span style="transform:scaleX(1.0757)">Fashiondesigner</span></div>
<div class="t grid" style="left:371.5px;top:69px;height:16px;line-height:16px;color:#000;width:145px;overflow:hidden;"><span style="transform:scaleX(1.0462)">Fashion Assistant</span></div>
<div class="t grid" style="left:371.5px;top:86px;height:16px;line-height:16px;color:#000;width:145px;overflow:hidden;"><span style="transform:scaleX(1.038)">Dipl.Techniker HF Textil</span></div>
<div class="t grid" style="left:521.5px;top:31px;height:16px;line-height:16px;color:#000;width:95px;overflow:hidden;"><span style="transform:scaleX(1.0538)">Beschreibung</span></div>
<div class="t grid" style="left:522.5px;top:52px;height:16px;line-height:16px;color:#000;width:94px;overflow:hidden;"><span style="transform:scaleX(1.0299)">770 Fashionde...</span></div>
<div class="t grid" style="left:522.5px;top:69px;height:16px;line-height:16px;color:#000;width:94px;overflow:hidden;"><span style="transform:scaleX(1.0299)">Fashion Assista...</span></div>
<div class="t grid" style="left:522.5px;top:86px;height:16px;line-height:16px;color:#000;width:94px;overflow:hidden;"><span style="transform:scaleX(1.0316)">Fashion Desig...</span></div>
<div style="left:1045px;top:1px;width:308px;height:19px;background:linear-gradient(#bccbdc,#d3e1ef)"></div>
<div class="t hdr" style="left:1048.5px;top:2px;height:19px;line-height:19px;color:#58647c;"><span style="transform:scaleX(1.0706)">Details</span></div>
<svg class="i" style="left:1322px;top:9px" width="9" height="5" shape-rendering="crispEdges"><path fill="#000" d="M0 0h9v1h-9zM1 1h7v1h-7zM2 2h5v1h-5zM3 3h3v1h-3zM4 4h1v1h-1z"/></svg>
<svg class="i" style="left:1339px;top:7px" width="8" height="7" shape-rendering="crispEdges"><path fill="#000" d="M0 0h2v1h-2zM6 0h2v1h-2zM1 1h2v1h-2zM5 1h2v1h-2zM2 2h4v1h-4zM3 3h2v1h-2zM2 4h4v1h-4zM1 5h2v1h-2zM5 5h2v1h-2zM0 6h2v1h-2zM6 6h2v1h-2z"/></svg>
<div style="left:1045px;top:20px;width:308px;height:1px;background:#eef1f8"></div>
<div style="left:1045px;top:21px;width:308px;height:23px;background:linear-gradient(#f6f6f6 0,#eeeeee 45%,#dedede 50%,#d6d6d6 100%);border:1px solid #686868;border-radius:3px;box-sizing:border-box"></div>
<div class="t combo" style="left:1048.5px;top:23px;height:21px;line-height:21px;color:#000;"><span style="transform:scaleX(1.0125)">Dokumentendaten</span></div>
<svg class="i" style="left:1341px;top:31px" width="7" height="4" shape-rendering="crispEdges"><path fill="#000" d="M0 0h7v1h-7zM1 1h5v1h-5zM2 2h3v1h-3zM3 3h1v1h-1z"/></svg>
<div style="left:1045px;top:44px;width:308px;height:23px;background:linear-gradient(#f5f6fc 0,#f0f2fa 30%,#e1e2ee 52%,#cfd0e0 72%,#b1b2cc 100%)"></div>
<svg class="i" style="left:1050px;top:48px" width="16" height="16"><use href="#ic_cat"/></svg>
<svg class="i" style="left:1072px;top:48px" width="16" height="16"><use href="#ic_az"/></svg>
<svg class="i" style="left:1102px;top:48px" width="16" height="16"><use href="#ic_refresh"/></svg>
<svg class="i" style="left:1124px;top:48px" width="16" height="16"><use href="#ic_save"/></svg>
<svg class="i" style="left:1146px;top:48px" width="16" height="16"><use href="#ic_edit"/></svg>
<svg class="i" style="left:1168px;top:48px" width="16" height="16"><use href="#ic_doc"/></svg>
<svg class="i" style="left:1190px;top:48px" width="16" height="16"><use href="#ic_copy"/></svg>
<svg class="i" style="left:1220px;top:48px" width="16" height="16"><use href="#ic_del"/></svg>
<div style="left:1095px;top:48px;width:1px;height:17px;background:#c4c5d2"></div>
<div style="left:1096px;top:49px;width:1px;height:17px;background:#f4f4fa;opacity:.6"></div>
<div style="left:1213px;top:48px;width:1px;height:17px;background:#c4c5d2"></div>
<div style="left:1214px;top:49px;width:1px;height:17px;background:#f4f4fa;opacity:.6"></div>
<div style="left:1045px;top:67px;width:308px;height:298px;background:#fff"></div>
<div style="left:1045px;top:67px;width:17px;height:51px;background:#efefef"></div>
<div style="left:1045px;top:67px;width:308px;height:17px;background:#efefef"></div>
<div class="eb2" style="left:1049px;top:70px"><div style="left:1px;top:3px;width:5px;height:1px;background:#4a62a8"></div></div>
<div class="t cat" style="left:1066px;top:67px;height:17px;line-height:17px;color:#686868;"><span style="transform:scaleX(1.1702)">Ausbildung</span></div>
<div style="left:1062px;top:100px;width:291px;height:1px;background:#efefef"></div>
<div style="left:1199px;top:84px;width:1px;height:17px;background:#efefef"></div>
<div class="t prop" style="left:1066.2px;top:84px;height:16px;line-height:16px;color:#000;"><span style="transform:scaleX(0.9951)">Name</span></div>
<div class="t prop" style="left:1204px;top:84px;height:16px;line-height:16px;color:#000;width:149px;overflow:hidden;"><span style="transform:scaleX(1.038)">Dipl.Techniker HF Textil</span></div>
<div style="left:1062px;top:117px;width:291px;height:1px;background:#efefef"></div>
<div style="left:1199px;top:101px;width:1px;height:17px;background:#efefef"></div>
<div class="t prop" style="left:1066.2px;top:101px;height:16px;line-height:16px;color:#000;"><span style="transform:scaleX(1.0538)">Beschreibung</span></div>
<div class="t prop" style="left:1204px;top:101px;height:16px;line-height:16px;color:#000;width:149px;overflow:hidden;"><span style="transform:scaleX(1.0537)">Fashion Design &amp; Technol</span></div>
</div></div>
<div class="win" style="left:32px;top:209px;width:1352px;height:298px">
<div class="org" style="left:-1px;top:3px">
<div style="left:0px;top:-3px;width:1353px;height:298px;background:#ebecf9"></div>
<div style="left:0px;top:1px;width:2px;height:295px;background:#fbfbff"></div>
<div style="left:-4px;top:-3px;width:164px;height:1px;background:#fdfdfe"></div>
<div style="left:160px;top:-3px;width:4px;height:3px;background:#c1c2d7"></div>
<div style="left:-4px;top:-2px;width:166px;height:2px;background:#b7b8cf"></div>
<div style="left:-4px;top:0px;width:165px;height:1px;background:#9597af"></div>
<div style="left:161px;top:-2px;width:3px;height:2px;background:#c1c2d7"></div>
<div style="left:165px;top:0px;width:1188px;height:1px;background:#f4f5fc"></div>
<div style="left:-4px;top:5px;width:7px;height:20px;background:linear-gradient(90deg,#6c6c6c,#969696)"></div>
<div style="left:2px;top:25px;width:1px;height:295px;background:#9c9c9c"></div>
<div style="left:7px;top:20px;width:348px;height:295px;background:#f9f9fe"></div>
<div style="left:7px;top:1px;width:348px;height:19px;background:linear-gradient(#98b3d3,#b6cfe8)"></div>
<div class="t hdr" style="left:10.9px;top:2px;height:19px;line-height:19px;color:#000;"><span style="transform:scaleX(1.1445)">Notendefinitionen</span></div>
<svg class="i" style="left:324px;top:9px" width="9" height="5" shape-rendering="crispEdges"><path fill="#000" d="M0 0h9v1h-9zM1 1h7v1h-7zM2 2h5v1h-5zM3 3h3v1h-3zM4 4h1v1h-1z"/></svg>
<svg class="i" style="left:341px;top:7px" width="8" height="7" shape-rendering="crispEdges"><path fill="#000" d="M0 0h2v1h-2zM6 0h2v1h-2zM1 1h2v1h-2zM5 1h2v1h-2zM2 2h4v1h-4zM3 3h2v1h-2zM2 4h4v1h-4zM1 5h2v1h-2zM5 5h2v1h-2zM0 6h2v1h-2zM6 6h2v1h-2z"/></svg>
<div style="left:11px;top:25px;width:340px;height:24px;background:linear-gradient(#f4f6fc 0,#f0f2fa 30%,#e1e2ee 52%,#cfd0e0 72%,#b1b2cc 100%)"></div>
<div style="left:11px;top:49px;width:340px;height:295px;background:#fff;border:1px solid #6a6a6a;box-sizing:border-box"></div>
<div class="hd" style="left:29px;top:60px;width:6px;height:1px;"></div>
<div class="eb" style="left:19px;top:56px"><div style="left:1px;top:3px;width:5px;height:1px;background:#3c5a9e"></div></div>
<svg class="i" style="left:35px;top:51px" width="16" height="16"><use href="#ic_root"/></svg>
<div class="t tree" style="left:54.6px;top:50px;height:18px;line-height:18px;color:#000;"><span style="transform:scaleX(1.0301)">Abteilungen</span></div>
<div class="hd" style="left:48px;top:78px;width:5px;height:1px;"></div>
<div class="vd" style="left:42px;top:68px;width:1px;height:5px;"></div>
<div class="eb" style="left:38px;top:74px"><div style="left:1px;top:3px;width:5px;height:1px;background:#3c5a9e"></div><div style="left:3px;top:1px;width:1px;height:5px;background:#3c5a9e"></div></div>
<svg class="i" style="left:53px;top:69px" width="16" height="16"><use href="#ic_house"/></svg>
<div class="t tree" style="left:73.6px;top:68px;height:18px;line-height:18px;color:#000;"><span style="transform:scaleX(0.977)">Design</span></div>
<div class="hd" style="left:48px;top:96px;width:5px;height:1px;"></div>
<div class="vd" style="left:42px;top:84px;width:1px;height:7px;"></div>
<div class="eb" style="left:38px;top:92px"><div style="left:1px;top:3px;width:5px;height:1px;background:#3c5a9e"></div></div>
<svg class="i" style="left:53px;top:87px" width="16" height="16"><use href="#ic_house"/></svg>
<div class="t tree" style="left:73.6px;top:86px;height:18px;line-height:18px;color:#000;"><span style="transform:scaleX(0.9671)">Fashion</span></div>
<div class="hd" style="left:67px;top:114px;width:6px;height:1px;"></div>
<div class="vd" style="left:61px;top:104px;width:1px;height:5px;"></div>
<div class="eb" style="left:57px;top:110px"><div style="left:1px;top:3px;width:5px;height:1px;background:#3c5a9e"></div></div>
<svg class="i" style="left:73px;top:105px" width="16" height="16"><use href="#ic_cap"/></svg>
<div class="sel" style="left:91px;top:104px;width:129px;height:18px;"></div>
<div class="t tree" style="left:92.6px;top:104px;height:18px;line-height:18px;color:#fff;"><span style="transform:scaleX(1.0019)">Dipl.Techniker HF Textil</span></div>
<div class="hd" style="left:86px;top:132px;width:5px;height:1px;"></div>
<div class="vd" style="left:80px;top:122px;width:1px;height:5px;"></div>
<div class="eb" style="left:76px;top:128px"><div style="left:1px;top:3px;width:5px;height:1px;background:#3c5a9e"></div><div style="left:3px;top:1px;width:1px;height:5px;background:#3c5a9e"></div></div>
<svg class="i" style="left:91px;top:123px" width="16" height="16"><use href="#ic_regl"/></svg>
<div class="t tree" style="left:111.6px;top:122px;height:18px;line-height:18px;color:#000;"><span style="transform:scaleX(0.9618)">136/137 Techn.Textil V2014-1 März 2014</span></div>
<div class="vd" style="left:42px;top:102px;width:1px;height:78px;"></div>
<div class="vd" style="left:61px;top:120px;width:1px;height:60px;"></div>
<div class="vd" style="left:80px;top:138px;width:1px;height:42px;"></div>
<div style="left:359px;top:1px;width:682px;height:295px;background:#f0f0f0;border:1px solid #9c9c9c;border-bottom:0;box-sizing:border-box"></div>
<div style="left:360px;top:21px;width:680px;height:1px;background:#a0a0a0"></div>
<div style="left:360px;top:22px;width:680px;height:295px;background:linear-gradient(90deg,#ffd873,#ffe27c 50%,#ffeb84)"></div>
<svg class="i" style="left:360px;top:2px" width="125" height="21"><defs><linearGradient id="tg" x1="0" y1="0" x2="0" y2="1"><stop offset="0.07" stop-color="#ffffff"/><stop offset="0.12" stop-color="#ffff8e"/><stop offset="0.46" stop-color="#ffff8a"/><stop offset="0.53" stop-color="#ffea80"/><stop offset="0.60" stop-color="#ffda79"/><stop offset="1" stop-color="#ffd873"/></linearGradient></defs><path d="M0.5 20.5 L19.5 1.5 H121.0 Q123.0 1.5 123.0 3.5 V21 H0.5 Z" fill="url(#tg)"/><path d="M1.9 20 L20.3 2.6" stroke="#fff" stroke-width="0.9" fill="none"/><path d="M19.5 1.5 H121.0 Q123.0 1.5 123.0 3.5 V20" stroke="#7c7c7c" stroke-width="1" fill="none"/><path d="M0.6 20.1 L19.6 1.4" stroke="#505050" stroke-width="0.8" fill="none"/></svg>
<div class="t tab" style="left:394px;top:4px;height:17px;line-height:17px;color:#000;"><span style="transform:scaleX(1.0103)">Reglemente</span></div>
<svg class="i" style="left:469px;top:10px" width="8" height="7" shape-rendering="crispEdges"><path fill="#000" d="M0 0h2v1h-2zM6 0h2v1h-2zM1 1h2v1h-2zM5 1h2v1h-2zM2 2h4v1h-4zM3 3h2v1h-2zM2 4h4v1h-4zM1 5h2v1h-2zM5 5h2v1h-2zM0 6h2v1h-2zM6 6h2v1h-2z"/></svg>
<svg class="i" style="left:1025px;top:10px" width="9" height="5" shape-rendering="crispEdges"><path fill="#000" d="M0 0h9v1h-9zM1 1h7v1h-7zM2 2h5v1h-5zM3 3h3v1h-3zM4 4h1v1h-1z"/></svg>
<div style="left:364px;top:25px;width:672px;height:295px;background:#fff;border-left:2px solid #787878;border-top:2px solid #6e6e6e;box-sizing:border-box"></div>
<div style="left:364px;top:25px;width:671px;height:1px;background:#8c8c8c"></div>
<div style="left:1034px;top:27px;width:1px;height:295px;background:#e2e2e2"></div>
<div style="left:366px;top:27px;width:668px;height:9px;background:#fff"></div>
<div style="left:366px;top:36px;width:668px;height:13px;background:linear-gradient(#f5f5f7,#ececef)"></div>
<div style="left:366px;top:49px;width:668px;height:1px;background:#d2d2d2"></div>
<div style="left:366px;top:67px;width:668px;height:1px;background:#efefef"></div>
<div style="left:366px;top:84px;width:668px;height:1px;background:#efefef"></div>
<div style="left:366px;top:101px;width:668px;height:1px;background:#efefef"></div>
<div style="left:366px;top:118px;width:668px;height:1px;background:#efefef"></div>
<div style="left:366px;top:135px;width:668px;height:1px;background:#efefef"></div>
<div style="left:366px;top:152px;width:668px;height:1px;background:#efefef"></div>
<div style="left:366px;top:169px;width:668px;height:1px;background:#efefef"></div>
<div style="left:366px;top:186px;width:668px;height:1px;background:#efefef"></div>
<div style="left:366px;top:203px;width:668px;height:1px;background:#efefef"></div>
<div style="left:366px;top:220px;width:668px;height:1px;background:#efefef"></div>
<div style="left:366px;top:237px;width:668px;height:1px;background:#efefef"></div>
<div style="left:366px;top:254px;width:668px;height:1px;background:#efefef"></div>
<div style="left:366px;top:271px;width:668px;height:1px;background:#efefef"></div>
<div style="left:366px;top:288px;width:668px;height:1px;background:#efefef"></div>
<div style="left:366px;top:305px;width:668px;height:1px;background:#efefef"></div>
<div style="left:366px;top:68px;width:201px;height:16px;background:#f9f9f9"></div>
<div style="left:370px;top:85px;width:197px;height:16px;background:#efefef"></div>
<div style="left:465px;top:27px;width:1px;height:22px;background:#e3e3e6"></div>
<div style="left:466px;top:27px;width:1px;height:22px;background:#fbfbfd"></div>
<div style="left:466px;top:51px;width:1px;height:295px;background:#ececec"></div>
<div style="left:565px;top:27px;width:1px;height:22px;background:#e3e3e6"></div>
<div style="left:566px;top:27px;width:1px;height:22px;background:#fbfbfd"></div>
<div style="left:566px;top:51px;width:1px;height:295px;background:#ececec"></div>
<div class="t grid" style="left:370.5px;top:31px;height:16px;line-height:16px;color:#000;width:95px;overflow:hidden;"><span style="transform:scaleX(0.9951)">Name</span></div>
<div class="t grid" style="left:371.5px;top:52px;height:16px;line-height:16px;color:#000;width:94px;overflow:hidden;"><span style="transform:scaleX(1.0133)">136/137 Techn.T...</span></div>
<div class="t grid" style="left:371.5px;top:69px;height:16px;line-height:16px;color:#000;width:94px;overflow:hidden;"><span style="transform:scaleX(1.0133)">136/137 Techn.T...</span></div>
<div class="t grid" style="left:371.5px;top:86px;height:16px;line-height:16px;color:#000;width:94px;overflow:hidden;"><span style="transform:scaleX(0.9957)">FDT Techn.Textil...</span></div>
<div class="t grid" style="left:470.5px;top:31px;height:16px;line-height:16px;color:#000;width:95px;overflow:hidden;"><span style="transform:scaleX(1.0538)">Beschreibung</span></div>
<div class="t grid" style="left:471.5px;top:52px;height:16px;line-height:16px;color:#000;width:94px;overflow:hidden;"><span style="transform:scaleX(1.0675)">Dipl.Techniker/...</span></div>
<div class="t grid" style="left:471.5px;top:69px;height:16px;line-height:16px;color:#000;width:94px;overflow:hidden;"><span style="transform:scaleX(1.0607)">Dipl. Techniker...</span></div>
<div class="t grid" style="left:471.5px;top:86px;height:16px;line-height:16px;color:#000;width:94px;overflow:hidden;"><span style="transform:scaleX(1.0607)">Dipl. Techniker...</span></div>
<div style="left:1045px;top:1px;width:308px;height:19px;background:linear-gradient(#bccbdc,#d3e1ef)"></div>
<div class="t hdr" style="left:1048.5px;top:2px;height:19px;line-height:19px;color:#58647c;"><span style="transform:scaleX(1.0706)">Details</span></div>
<svg class="i" style="left:1322px;top:9px" width="9" height="5" shape-rendering="crispEdges"><path fill="#000" d="M0 0h9v1h-9zM1 1h7v1h-7zM2 2h5v1h-5zM3 3h3v1h-3zM4 4h1v1h-1z"/></svg>
<svg class="i" style="left:1339px;top:7px" width="8" height="7" shape-rendering="crispEdges"><path fill="#000" d="M0 0h2v1h-2zM6 0h2v1h-2zM1 1h2v1h-2zM5 1h2v1h-2zM2 2h4v1h-4zM3 3h2v1h-2zM2 4h4v1h-4zM1 5h2v1h-2zM5 5h2v1h-2zM0 6h2v1h-2zM6 6h2v1h-2z"/></svg>
<div style="left:1045px;top:20px;width:308px;height:1px;background:#eef1f8"></div>
<div style="left:1045px;top:21px;width:308px;height:23px;background:linear-gradient(#f6f6f6 0,#eeeeee 45%,#dedede 50%,#d6d6d6 100%);border:1px solid #686868;border-radius:3px;box-sizing:border-box"></div>
<div class="t combo" style="left:1048.5px;top:23px;height:21px;line-height:21px;color:#000;"><span style="transform:scaleX(1.0125)">Dokumentendaten</span></div>
<svg class="i" style="left:1341px;top:31px" width="7" height="4" shape-rendering="crispEdges"><path fill="#000" d="M0 0h7v1h-7zM1 1h5v1h-5zM2 2h3v1h-3zM3 3h1v1h-1z"/></svg>
<div style="left:1045px;top:44px;width:308px;height:23px;background:linear-gradient(#f5f6fc 0,#f0f2fa 30%,#e1e2ee 52%,#cfd0e0 72%,#b1b2cc 100%)"></div>
<svg class="i" style="left:1050px;top:48px" width="16" height="16"><use href="#ic_cat"/></svg>
<svg class="i" style="left:1072px;top:48px" width="16" height="16"><use href="#ic_az"/></svg>
<svg class="i" style="left:1102px;top:48px" width="16" height="16"><use href="#ic_refresh"/></svg>
<svg class="i" style="left:1124px;top:48px" width="16" height="16"><use href="#ic_save"/></svg>
<svg class="i" style="left:1146px;top:48px" width="16" height="16"><use href="#ic_edit"/></svg>
<svg class="i" style="left:1168px;top:48px" width="16" height="16"><use href="#ic_doc"/></svg>
<svg class="i" style="left:1190px;top:48px" width="16" height="16"><use href="#ic_copy"/></svg>
<svg class="i" style="left:1220px;top:48px" width="16" height="16"><use href="#ic_del"/></svg>
<div style="left:1095px;top:48px;width:1px;height:17px;background:#c4c5d2"></div>
<div style="left:1096px;top:49px;width:1px;height:17px;background:#f4f4fa;opacity:.6"></div>
<div style="left:1213px;top:48px;width:1px;height:17px;background:#c4c5d2"></div>
<div style="left:1214px;top:49px;width:1px;height:17px;background:#f4f4fa;opacity:.6"></div>
<div style="left:1045px;top:67px;width:308px;height:295px;background:#fff"></div>
<div style="left:1045px;top:67px;width:17px;height:68px;background:#efefef"></div>
<div style="left:1045px;top:67px;width:308px;height:17px;background:#efefef"></div>
<div class="eb2" style="left:1049px;top:70px"><div style="left:1px;top:3px;width:5px;height:1px;background:#4a62a8"></div></div>
<div class="t cat" style="left:1066px;top:67px;height:17px;line-height:17px;color:#686868;"><span style="transform:scaleX(1.1556)">Reglement</span></div>
<div style="left:1062px;top:100px;width:291px;height:1px;background:#efefef"></div>
<div style="left:1199px;top:84px;width:1px;height:17px;background:#efefef"></div>
<div class="t prop" style="left:1066.2px;top:84px;height:16px;line-height:16px;color:#000;"><span style="transform:scaleX(0.9951)">Name</span></div>
<div class="t prop" style="left:1204px;top:84px;height:16px;line-height:16px;color:#000;width:149px;overflow:hidden;"><span style="transform:scaleX(0.9891)">FDT Techn.Textil v15</span></div>
<div style="left:1062px;top:117px;width:291px;height:1px;background:#efefef"></div>
<div style="left:1199px;top:101px;width:1px;height:17px;background:#efefef"></div>
<div class="t prop" style="left:1066.2px;top:101px;height:16px;line-height:16px;color:#000;"><span style="transform:scaleX(1.0538)">Beschreibung</span></div>
<div class="t prop" style="left:1204px;top:101px;height:16px;line-height:16px;color:#000;width:149px;overflow:hidden;"><span style="transform:scaleX(1.0508)">Dipl. Techniker/in HF Textil...</span></div>
<div style="left:1062px;top:134px;width:291px;height:1px;background:#efefef"></div>
<div style="left:1199px;top:118px;width:1px;height:17px;background:#efefef"></div>
<div class="t prop" style="left:1066.2px;top:118px;height:16px;line-height:16px;color:#838383;"><span style="transform:scaleX(1.0817)">Globale Funktionen</span></div>
<div class="t prop" style="left:1204px;top:118px;height:16px;line-height:16px;color:#838383;width:149px;overflow:hidden;"><span style="transform:scaleX(1.0596)">&lt;Text&gt;</span></div>
</div></div>
<div class="win" style="left:59px;top:344px;width:1352px;height:285px">
<div class="org" style="left:-1px;top:5px">
<div style="left:0px;top:-5px;width:1353px;height:285px;background:#ebecf9"></div>
<div style="left:0px;top:1px;width:2px;height:280px;background:#fbfbff"></div>
<div style="left:-4px;top:-5px;width:164px;height:3px;background:#fdfdfe"></div>
<div style="left:147px;top:-5px;width:12px;height:2px;background:#b3b4cb"></div>
<div style="left:160px;top:-5px;width:4px;height:5px;background:#c1c2d7"></div>
<div style="left:-4px;top:-2px;width:166px;height:2px;background:#b7b8cf"></div>
<div style="left:-4px;top:0px;width:165px;height:1px;background:#9597af"></div>
<div style="left:161px;top:-2px;width:3px;height:2px;background:#c1c2d7"></div>
<div style="left:165px;top:0px;width:1188px;height:1px;background:#f4f5fc"></div>
<div style="left:-4px;top:5px;width:7px;height:20px;background:linear-gradient(90deg,#6c6c6c,#969696)"></div>
<div style="left:2px;top:25px;width:1px;height:280px;background:#9c9c9c"></div>
<div style="left:7px;top:20px;width:348px;height:280px;background:#f9f9fe"></div>
<div style="left:7px;top:1px;width:348px;height:19px;background:linear-gradient(#98b3d3,#b6cfe8)"></div>
<div class="t hdr" style="left:10.9px;top:2px;height:19px;line-height:19px;color:#000;"><span style="transform:scaleX(1.1445)">Notendefinitionen</span></div>
<svg class="i" style="left:324px;top:9px" width="9" height="5" shape-rendering="crispEdges"><path fill="#000" d="M0 0h9v1h-9zM1 1h7v1h-7zM2 2h5v1h-5zM3 3h3v1h-3zM4 4h1v1h-1z"/></svg>
<svg class="i" style="left:341px;top:7px" width="8" height="7" shape-rendering="crispEdges"><path fill="#000" d="M0 0h2v1h-2zM6 0h2v1h-2zM1 1h2v1h-2zM5 1h2v1h-2zM2 2h4v1h-4zM3 3h2v1h-2zM2 4h4v1h-4zM1 5h2v1h-2zM5 5h2v1h-2zM0 6h2v1h-2zM6 6h2v1h-2z"/></svg>
<div style="left:11px;top:25px;width:340px;height:24px;background:linear-gradient(#f4f6fc 0,#f0f2fa 30%,#e1e2ee 52%,#cfd0e0 72%,#b1b2cc 100%)"></div>
<div style="left:11px;top:49px;width:340px;height:280px;background:#fff;border:1px solid #6a6a6a;box-sizing:border-box"></div>
<div class="hd" style="left:29px;top:60px;width:6px;height:1px;"></div>
<div class="eb" style="left:19px;top:56px"><div style="left:1px;top:3px;width:5px;height:1px;background:#3c5a9e"></div></div>
<svg class="i" style="left:35px;top:51px" width="16" height="16"><use href="#ic_root"/></svg>
<div class="t tree" style="left:54.6px;top:50px;height:18px;line-height:18px;color:#000;"><span style="transform:scaleX(1.0301)">Abteilungen</span></div>
<div class="hd" style="left:48px;top:78px;width:5px;height:1px;"></div>
<div class="vd" style="left:42px;top:68px;width:1px;height:5px;"></div>
<div class="eb" style="left:38px;top:74px"><div style="left:1px;top:3px;width:5px;height:1px;background:#3c5a9e"></div><div style="left:3px;top:1px;width:1px;height:5px;background:#3c5a9e"></div></div>
<svg class="i" style="left:53px;top:69px" width="16" height="16"><use href="#ic_house"/></svg>
<div class="t tree" style="left:73.6px;top:68px;height:18px;line-height:18px;color:#000;"><span style="transform:scaleX(0.977)">Design</span></div>
<div class="hd" style="left:48px;top:96px;width:5px;height:1px;"></div>
<div class="vd" style="left:42px;top:84px;width:1px;height:7px;"></div>
<div class="eb" style="left:38px;top:92px"><div style="left:1px;top:3px;width:5px;height:1px;background:#3c5a9e"></div></div>
<svg class="i" style="left:53px;top:87px" width="16" height="16"><use href="#ic_house"/></svg>
<div class="t tree" style="left:73.6px;top:86px;height:18px;line-height:18px;color:#000;"><span style="transform:scaleX(0.9671)">Fashion</span></div>
<div class="hd" style="left:67px;top:114px;width:6px;height:1px;"></div>
<div class="vd" style="left:61px;top:104px;width:1px;height:5px;"></div>
<div class="eb" style="left:57px;top:110px"><div style="left:1px;top:3px;width:5px;height:1px;background:#3c5a9e"></div></div>
<svg class="i" style="left:73px;top:105px" width="16" height="16"><use href="#ic_cap"/></svg>
<div class="t tree" style="left:92.6px;top:104px;height:18px;line-height:18px;color:#000;"><span style="transform:scaleX(1.0019)">Dipl.Techniker HF Textil</span></div>
<div class="hd" style="left:86px;top:132px;width:5px;height:1px;"></div>
<div class="vd" style="left:80px;top:122px;width:1px;height:5px;"></div>
<div class="eb" style="left:76px;top:128px"><div style="left:1px;top:3px;width:5px;height:1px;background:#3c5a9e"></div><div style="left:3px;top:1px;width:1px;height:5px;background:#3c5a9e"></div></div>
<svg class="i" style="left:91px;top:123px" width="16" height="16"><use href="#ic_regl"/></svg>
<div class="t tree" style="left:111.6px;top:122px;height:18px;line-height:18px;color:#000;"><span style="transform:scaleX(0.9618)">136/137 Techn.Textil V2014-1 März 2014</span></div>
<div class="hd" style="left:86px;top:150px;width:5px;height:1px;"></div>
<div class="vd" style="left:80px;top:138px;width:1px;height:7px;"></div>
<div class="eb" style="left:76px;top:146px"><div style="left:1px;top:3px;width:5px;height:1px;background:#3c5a9e"></div><div style="left:3px;top:1px;width:1px;height:5px;background:#3c5a9e"></div></div>
<svg class="i" style="left:91px;top:141px" width="16" height="16"><use href="#ic_regl"/></svg>
<div class="t tree" style="left:111.6px;top:140px;height:18px;line-height:18px;color:#000;"><span style="transform:scaleX(0.9528)">136/137 Techn.Textil V6 14.08.2013</span></div>
<div class="hd" style="left:86px;top:168px;width:5px;height:1px;"></div>
<div class="vd" style="left:80px;top:156px;width:1px;height:7px;"></div>
<div class="eb" style="left:76px;top:164px"><div style="left:1px;top:3px;width:5px;height:1px;background:#3c5a9e"></div></div>
<svg class="i" style="left:91px;top:159px" width="16" height="16"><use href="#ic_regl"/></svg>
<div class="sel" style="left:110px;top:158px;width:113px;height:18px;"></div>
<div class="t tree" style="left:111.6px;top:158px;height:18px;line-height:18px;color:#fff;"><span style="transform:scaleX(0.9784)">FDT Techn.Textil v15</span></div>
<div class="hd" style="left:105px;top:186px;width:5px;height:1px;"></div>
<div class="vd" style="left:99px;top:176px;width:1px;height:5px;"></div>
<div class="eb" style="left:95px;top:182px"><div style="left:1px;top:3px;width:5px;height:1px;background:#3c5a9e"></div></div>
<svg class="i" style="left:110px;top:177px" width="16" height="16"><use href="#ic_vari"/></svg>
<div class="t tree" style="left:130.6px;top:176px;height:18px;line-height:18px;color:#000;"><span style="transform:scaleX(1.0211)">Dipl.Tech Textil</span></div>
<div class="vd" style="left:42px;top:102px;width:1px;height:132px;"></div>
<div class="vd" style="left:61px;top:120px;width:1px;height:114px;"></div>
<div class="vd" style="left:118px;top:194px;width:1px;height:40px;"></div>
<div style="left:359px;top:1px;width:682px;height:280px;background:#f0f0f0;border:1px solid #9c9c9c;border-bottom:0;box-sizing:border-box"></div>
<div style="left:360px;top:21px;width:680px;height:1px;background:#a0a0a0"></div>
<div style="left:360px;top:22px;width:680px;height:280px;background:linear-gradient(90deg,#ffd873,#ffe27c 50%,#ffeb84)"></div>
<svg class="i" style="left:360px;top:2px" width="113" height="21"><defs><linearGradient id="tg" x1="0" y1="0" x2="0" y2="1"><stop offset="0.07" stop-color="#ffffff"/><stop offset="0.12" stop-color="#ffff8e"/><stop offset="0.46" stop-color="#ffff8a"/><stop offset="0.53" stop-color="#ffea80"/><stop offset="0.60" stop-color="#ffda79"/><stop offset="1" stop-color="#ffd873"/></linearGradient></defs><path d="M0.5 20.5 L19.5 1.5 H108.5 Q110.5 1.5 110.5 3.5 V21 H0.5 Z" fill="url(#tg)"/><path d="M1.9 20 L20.3 2.6" stroke="#fff" stroke-width="0.9" fill="none"/><path d="M19.5 1.5 H108.5 Q110.5 1.5 110.5 3.5 V20" stroke="#7c7c7c" stroke-width="1" fill="none"/><path d="M0.6 20.1 L19.6 1.4" stroke="#505050" stroke-width="0.8" fill="none"/></svg>
<div class="t tab" style="left:394px;top:4px;height:17px;line-height:17px;color:#000;"><span style="transform:scaleX(1.0196)">Varianten</span></div>
<svg class="i" style="left:456px;top:10px" width="8" height="7" shape-rendering="crispEdges"><path fill="#000" d="M0 0h2v1h-2zM6 0h2v1h-2zM1 1h2v1h-2zM5 1h2v1h-2zM2 2h4v1h-4zM3 3h2v1h-2zM2 4h4v1h-4zM1 5h2v1h-2zM5 5h2v1h-2zM0 6h2v1h-2zM6 6h2v1h-2z"/></svg>
<svg class="i" style="left:1025px;top:10px" width="9" height="5" shape-rendering="crispEdges"><path fill="#000" d="M0 0h9v1h-9zM1 1h7v1h-7zM2 2h5v1h-5zM3 3h3v1h-3zM4 4h1v1h-1z"/></svg>
<div style="left:364px;top:25px;width:672px;height:280px;background:#fff;border-left:2px solid #787878;border-top:2px solid #6e6e6e;box-sizing:border-box"></div>
<div style="left:364px;top:25px;width:671px;height:1px;background:#8c8c8c"></div>
<div style="left:1034px;top:27px;width:1px;height:280px;background:#e2e2e2"></div>
<div style="left:366px;top:27px;width:668px;height:9px;background:#fff"></div>
<div style="left:366px;top:36px;width:668px;height:13px;background:linear-gradient(#f5f5f7,#ececef)"></div>
<div style="left:366px;top:49px;width:668px;height:1px;background:#d2d2d2"></div>
<div style="left:366px;top:67px;width:668px;height:1px;background:#efefef"></div>
<div style="left:366px;top:84px;width:668px;height:1px;background:#efefef"></div>
<div style="left:366px;top:101px;width:668px;height:1px;background:#efefef"></div>
<div style="left:366px;top:118px;width:668px;height:1px;background:#efefef"></div>
<div style="left:366px;top:135px;width:668px;height:1px;background:#efefef"></div>
<div style="left:366px;top:152px;width:668px;height:1px;background:#efefef"></div>
<div style="left:366px;top:169px;width:668px;height:1px;background:#efefef"></div>
<div style="left:366px;top:186px;width:668px;height:1px;background:#efefef"></div>
<div style="left:366px;top:203px;width:668px;height:1px;background:#efefef"></div>
<div style="left:366px;top:220px;width:668px;height:1px;background:#efefef"></div>
<div style="left:366px;top:237px;width:668px;height:1px;background:#efefef"></div>
<div style="left:366px;top:254px;width:668px;height:1px;background:#efefef"></div>
<div style="left:366px;top:271px;width:668px;height:1px;background:#efefef"></div>
<div style="left:366px;top:288px;width:668px;height:1px;background:#efefef"></div>
<div style="left:370px;top:51px;width:197px;height:16px;background:#efefef"></div>
<div style="left:465px;top:27px;width:1px;height:22px;background:#e3e3e6"></div>
<div style="left:466px;top:27px;width:1px;height:22px;background:#fbfbfd"></div>
<div style="left:466px;top:51px;width:1px;height:280px;background:#ececec"></div>
<div style="left:565px;top:27px;width:1px;height:22px;background:#e3e3e6"></div>
<div style="left:566px;top:27px;width:1px;height:22px;background:#fbfbfd"></div>
<div style="left:566px;top:51px;width:1px;height:280px;background:#ececec"></div>
<div class="t grid" style="left:370.5px;top:31px;height:16px;line-height:16px;color:#000;width:95px;overflow:hidden;"><span style="transform:scaleX(1.0833)">Variante</span></div>
<div class="t grid" style="left:371.5px;top:52px;height:16px;line-height:16px;color:#000;width:94px;overflow:hidden;"><span style="transform:scaleX(1.0428)">Dipl.Tech Textil</span></div>
<div class="t grid" style="left:470.5px;top:31px;height:16px;line-height:16px;color:#000;width:95px;overflow:hidden;"><span style="transform:scaleX(1.0538)">Beschreibung</span></div>
<div class="t grid" style="left:471.5px;top:52px;height:16px;line-height:16px;color:#000;width:94px;overflow:hidden;"><span style="transform:scaleX(1.0185)">Dipl Techn. Tex...</span></div>
<div style="left:1045px;top:1px;width:308px;height:19px;background:linear-gradient(#bccbdc,#d3e1ef)"></div>
<div class="t hdr" style="left:1048.5px;top:2px;height:19px;line-height:19px;color:#58647c;"><span style="transform:scaleX(1.0706)">Details</span></div>
<svg class="i" style="left:1322px;top:9px" width="9" height="5" shape-rendering="crispEdges"><path fill="#000" d="M0 0h9v1h-9zM1 1h7v1h-7zM2 2h5v1h-5zM3 3h3v1h-3zM4 4h1v1h-1z"/></svg>
<svg class="i" style="left:1339px;top:7px" width="8" height="7" shape-rendering="crispEdges"><path fill="#000" d="M0 0h2v1h-2zM6 0h2v1h-2zM1 1h2v1h-2zM5 1h2v1h-2zM2 2h4v1h-4zM3 3h2v1h-2zM2 4h4v1h-4zM1 5h2v1h-2zM5 5h2v1h-2zM0 6h2v1h-2zM6 6h2v1h-2z"/></svg>
<div style="left:1045px;top:20px;width:308px;height:1px;background:#eef1f8"></div>
<div style="left:1045px;top:21px;width:308px;height:23px;background:linear-gradient(#f6f6f6 0,#eeeeee 45%,#dedede 50%,#d6d6d6 100%);border:1px solid #686868;border-radius:3px;box-sizing:border-box"></div>
<div class="t combo" style="left:1048.5px;top:23px;height:21px;line-height:21px;color:#000;"><span style="transform:scaleX(1.0125)">Dokumentendaten</span></div>
<svg class="i" style="left:1341px;top:31px" width="7" height="4" shape-rendering="crispEdges"><path fill="#000" d="M0 0h7v1h-7zM1 1h5v1h-5zM2 2h3v1h-3zM3 3h1v1h-1z"/></svg>
<div style="left:1045px;top:44px;width:308px;height:23px;background:linear-gradient(#f5f6fc 0,#f0f2fa 30%,#e1e2ee 52%,#cfd0e0 72%,#b1b2cc 100%)"></div>
<svg class="i" style="left:1050px;top:48px" width="16" height="16"><use href="#ic_cat"/></svg>
<svg class="i" style="left:1072px;top:48px" width="16" height="16"><use href="#ic_az"/></svg>
<svg class="i" style="left:1102px;top:48px" width="16" height="16"><use href="#ic_refresh"/></svg>
<svg class="i" style="left:1124px;top:48px" width="16" height="16"><use href="#ic_save"/></svg>
<svg class="i" style="left:1146px;top:48px" width="16" height="16"><use href="#ic_edit"/></svg>
<svg class="i" style="left:1168px;top:48px" width="16" height="16"><use href="#ic_doc"/></svg>
<svg class="i" style="left:1190px;top:48px" width="16" height="16"><use href="#ic_copy"/></svg>
<svg class="i" style="left:1220px;top:48px" width="16" height="16"><use href="#ic_del"/></svg>
<div style="left:1095px;top:48px;width:1px;height:17px;background:#c4c5d2"></div>
<div style="left:1096px;top:49px;width:1px;height:17px;background:#f4f4fa;opacity:.6"></div>
<div style="left:1213px;top:48px;width:1px;height:17px;background:#c4c5d2"></div>
<div style="left:1214px;top:49px;width:1px;height:17px;background:#f4f4fa;opacity:.6"></div>
<div style="left:1045px;top:67px;width:308px;height:280px;background:#fff"></div>
<div style="left:1045px;top:67px;width:17px;height:119px;background:#efefef"></div>
<div style="left:1045px;top:67px;width:308px;height:17px;background:#efefef"></div>
<div class="eb2" style="left:1049px;top:70px"><div style="left:1px;top:3px;width:5px;height:1px;background:#4a62a8"></div></div>
<div class="t cat" style="left:1066px;top:67px;height:17px;line-height:17px;color:#686868;"><span style="transform:scaleX(1.2146)">Variante</span></div>
<div style="left:1062px;top:100px;width:291px;height:1px;background:#efefef"></div>
<div style="left:1199px;top:84px;width:1px;height:17px;background:#efefef"></div>
<div class="t prop" style="left:1066.2px;top:84px;height:16px;line-height:16px;color:#000;"><span style="transform:scaleX(1.0833)">Variante</span></div>
<div class="t prop" style="left:1204px;top:84px;height:16px;line-height:16px;color:#000;width:149px;overflow:hidden;"><span style="transform:scaleX(1.0428)">Dipl.Tech Textil</span></div>
<div style="left:1062px;top:117px;width:291px;height:1px;background:#efefef"></div>
<div style="left:1199px;top:101px;width:1px;height:17px;background:#efefef"></div>
<div class="t prop" style="left:1066.2px;top:101px;height:16px;line-height:16px;color:#000;"><span style="transform:scaleX(1.0538)">Beschreibung</span></div>
<div class="t prop" style="left:1204px;top:101px;height:16px;line-height:16px;color:#000;width:149px;overflow:hidden;"><span style="transform:scaleX(1.0398)">Dipl Techn. Textil Fashion ...</span></div>
<div style="left:1062px;top:134px;width:291px;height:1px;background:#efefef"></div>
<div style="left:1199px;top:118px;width:1px;height:17px;background:#efefef"></div>
<div class="t prop" style="left:1066.2px;top:118px;height:16px;line-height:16px;color:#838383;"><span style="transform:scaleX(1.0817)">Globale Funktionen</span></div>
<div class="t prop" style="left:1204px;top:118px;height:16px;line-height:16px;color:#838383;width:149px;overflow:hidden;"><span style="transform:scaleX(1.0596)">&lt;Text&gt;</span></div>
<div style="left:1062px;top:151px;width:291px;height:1px;background:#efefef"></div>
<div style="left:1199px;top:135px;width:1px;height:17px;background:#efefef"></div>
<div class="t prop" style="left:1066.2px;top:135px;height:16px;line-height:16px;color:#838383;"><span style="transform:scaleX(1.0432)">Reglement</span></div>
<div class="t prop" style="left:1204px;top:135px;height:16px;line-height:16px;color:#838383;width:149px;overflow:hidden;"><span style="transform:scaleX(0.9891)">FDT Techn.Textil v15</span></div>
<div style="left:1045px;top:152px;width:308px;height:17px;background:#efefef"></div>
<div class="eb2" style="left:1049px;top:155px"><div style="left:1px;top:3px;width:5px;height:1px;background:#4a62a8"></div></div>
<div class="t cat" style="left:1066px;top:152px;height:17px;line-height:17px;color:#686868;"><span style="transform:scaleX(1.2)">Information</span></div>
<div style="left:1062px;top:185px;width:291px;height:1px;background:#efefef"></div>
<div style="left:1199px;top:169px;width:1px;height:17px;background:#efefef"></div>
<div class="t prop" style="left:1066.2px;top:169px;height:16px;line-height:16px;color:#000;"><span style="transform:scaleX(1.0418)">Datensatz</span></div>
<div class="t prop" style="left:1204px;top:169px;height:16px;line-height:16px;color:#000;width:149px;overflow:hidden;"><span style="transform:scaleX(0.9267)">29</span></div>
</div></div>
<div class="win" style="left:93px;top:533px;width:1353px;height:296px">
<div class="org" style="left:0px;top:0px">
<div style="left:0px;top:0px;width:1353px;height:296px;background:#ebecf9"></div>
<div style="left:0px;top:1px;width:2px;height:296px;background:#fbfbff"></div>
<div style="left:-4px;top:-2px;width:166px;height:2px;background:#b7b8cf"></div>
<div style="left:-4px;top:0px;width:165px;height:1px;background:#9597af"></div>
<div style="left:161px;top:-2px;width:3px;height:2px;background:#c1c2d7"></div>
<div style="left:165px;top:0px;width:1188px;height:1px;background:#f4f5fc"></div>
<div style="left:-4px;top:5px;width:7px;height:20px;background:linear-gradient(90deg,#6c6c6c,#969696)"></div>
<div style="left:2px;top:25px;width:1px;height:296px;background:#9c9c9c"></div>
<div style="left:7px;top:20px;width:348px;height:296px;background:#f9f9fe"></div>
<div style="left:7px;top:1px;width:348px;height:19px;background:linear-gradient(#98b3d3,#b6cfe8)"></div>
<div class="t hdr" style="left:10.9px;top:2px;height:19px;line-height:19px;color:#000;"><span style="transform:scaleX(1.1445)">Notendefinitionen</span></div>
<svg class="i" style="left:324px;top:9px" width="9" height="5" shape-rendering="crispEdges"><path fill="#000" d="M0 0h9v1h-9zM1 1h7v1h-7zM2 2h5v1h-5zM3 3h3v1h-3zM4 4h1v1h-1z"/></svg>
<svg class="i" style="left:341px;top:7px" width="8" height="7" shape-rendering="crispEdges"><path fill="#000" d="M0 0h2v1h-2zM6 0h2v1h-2zM1 1h2v1h-2zM5 1h2v1h-2zM2 2h4v1h-4zM3 3h2v1h-2zM2 4h4v1h-4zM1 5h2v1h-2zM5 5h2v1h-2zM0 6h2v1h-2zM6 6h2v1h-2z"/></svg>
<div style="left:11px;top:25px;width:340px;height:24px;background:linear-gradient(#f4f6fc 0,#f0f2fa 30%,#e1e2ee 52%,#cfd0e0 72%,#b1b2cc 100%)"></div>
<div style="left:11px;top:49px;width:340px;height:296px;background:#fff;border:1px solid #6a6a6a;box-sizing:border-box"></div>
<div class="hd" style="left:29px;top:60px;width:6px;height:1px;"></div>
<div class="eb" style="left:19px;top:56px"><div style="left:1px;top:3px;width:5px;height:1px;background:#3c5a9e"></div></div>
<svg class="i" style="left:35px;top:51px" width="16" height="16"><use href="#ic_root"/></svg>
<div class="t tree" style="left:54.6px;top:50px;height:18px;line-height:18px;color:#000;"><span style="transform:scaleX(1.0301)">Abteilungen</span></div>
<div class="hd" style="left:48px;top:78px;width:5px;height:1px;"></div>
<div class="vd" style="left:42px;top:68px;width:1px;height:5px;"></div>
<div class="eb" style="left:38px;top:74px"><div style="left:1px;top:3px;width:5px;height:1px;background:#3c5a9e"></div><div style="left:3px;top:1px;width:1px;height:5px;background:#3c5a9e"></div></div>
<svg class="i" style="left:53px;top:69px" width="16" height="16"><use href="#ic_house"/></svg>
<div class="t tree" style="left:73.6px;top:68px;height:18px;line-height:18px;color:#000;"><span style="transform:scaleX(0.977)">Design</span></div>
<div class="hd" style="left:48px;top:96px;width:5px;height:1px;"></div>
<div class="vd" style="left:42px;top:84px;width:1px;height:7px;"></div>
<div class="eb" style="left:38px;top:92px"><div style="left:1px;top:3px;width:5px;height:1px;background:#3c5a9e"></div></div>
<svg class="i" style="left:53px;top:87px" width="16" height="16"><use href="#ic_house"/></svg>
<div class="t tree" style="left:73.6px;top:86px;height:18px;line-height:18px;color:#000;"><span style="transform:scaleX(0.9671)">Fashion</span></div>
<div class="hd" style="left:67px;top:114px;width:6px;height:1px;"></div>
<div class="vd" style="left:61px;top:104px;width:1px;height:5px;"></div>
<div class="eb" style="left:57px;top:110px"><div style="left:1px;top:3px;width:5px;height:1px;background:#3c5a9e"></div></div>
<svg class="i" style="left:73px;top:105px" width="16" height="16"><use href="#ic_cap"/></svg>
<div class="t tree" style="left:92.6px;top:104px;height:18px;line-height:18px;color:#000;"><span style="transform:scaleX(1.0019)">Dipl.Techniker HF Textil</span></div>
<div class="hd" style="left:86px;top:132px;width:5px;height:1px;"></div>
<div class="vd" style="left:80px;top:122px;width:1px;height:5px;"></div>
<div class="eb" style="left:76px;top:128px"><div style="left:1px;top:3px;width:5px;height:1px;background:#3c5a9e"></div><div style="left:3px;top:1px;width:1px;height:5px;background:#3c5a9e"></div></div>
<svg class="i" style="left:91px;top:123px" width="16" height="16"><use href="#ic_regl"/></svg>
<div class="t tree" style="left:111.6px;top:122px;height:18px;line-height:18px;color:#000;"><span style="transform:scaleX(0.9618)">136/137 Techn.Textil V2014-1 März 2014</span></div>
<div class="hd" style="left:86px;top:150px;width:5px;height:1px;"></div>
<div class="vd" style="left:80px;top:138px;width:1px;height:7px;"></div>
<div class="eb" style="left:76px;top:146px"><div style="left:1px;top:3px;width:5px;height:1px;background:#3c5a9e"></div><div style="left:3px;top:1px;width:1px;height:5px;background:#3c5a9e"></div></div>
<svg class="i" style="left:91px;top:141px" width="16" height="16"><use href="#ic_regl"/></svg>
<div class="t tree" style="left:111.6px;top:140px;height:18px;line-height:18px;color:#000;"><span style="transform:scaleX(0.9528)">136/137 Techn.Textil V6 14.08.2013</span></div>
<div class="hd" style="left:86px;top:168px;width:5px;height:1px;"></div>
<div class="vd" style="left:80px;top:156px;width:1px;height:7px;"></div>
<div class="eb" style="left:76px;top:164px"><div style="left:1px;top:3px;width:5px;height:1px;background:#3c5a9e"></div></div>
<svg class="i" style="left:91px;top:159px" width="16" height="16"><use href="#ic_regl"/></svg>
<div class="t tree" style="left:111.6px;top:158px;height:18px;line-height:18px;color:#000;"><span style="transform:scaleX(0.9784)">FDT Techn.Textil v15</span></div>
<div class="hd" style="left:105px;top:186px;width:5px;height:1px;"></div>
<div class="vd" style="left:99px;top:176px;width:1px;height:5px;"></div>
<div class="eb" style="left:95px;top:182px"><div style="left:1px;top:3px;width:5px;height:1px;background:#3c5a9e"></div></div>
<svg class="i" style="left:110px;top:177px" width="16" height="16"><use href="#ic_vari"/></svg>
<div class="sel" style="left:129px;top:176px;width:85px;height:18px;"></div>
<div class="t tree" style="left:130.6px;top:176px;height:18px;line-height:18px;color:#fff;"><span style="transform:scaleX(1.0211)">Dipl.Tech Textil</span></div>
<div class="hd" style="left:120px;top:204px;width:10px;height:1px;"></div>
<div class="vd" style="left:118px;top:194px;width:1px;height:11px;"></div>
<svg class="i" style="left:130px;top:195px" width="16" height="16"><use href="#ic_defi"/></svg>
<div class="t tree" style="left:149.6px;top:194px;height:18px;line-height:18px;color:#000;"><span style="transform:scaleX(0.914)">FDT1_Semester 1v15</span></div>
<div class="vd" style="left:42px;top:102px;width:1px;height:150px;"></div>
<div class="vd" style="left:61px;top:120px;width:1px;height:132px;"></div>
<div class="vd" style="left:118px;top:206px;width:1px;height:46px;"></div>
<div style="left:359px;top:1px;width:682px;height:296px;background:#f0f0f0;border:1px solid #9c9c9c;border-bottom:0;box-sizing:border-box"></div>
<div style="left:360px;top:21px;width:680px;height:1px;background:#a0a0a0"></div>
<div style="left:360px;top:22px;width:680px;height:296px;background:linear-gradient(90deg,#ffd873,#ffe27c 50%,#ffeb84)"></div>
<svg class="i" style="left:360px;top:2px" width="127" height="21"><defs><linearGradient id="tg" x1="0" y1="0" x2="0" y2="1"><stop offset="0.07" stop-color="#ffffff"/><stop offset="0.12" stop-color="#ffff8e"/><stop offset="0.46" stop-color="#ffff8a"/><stop offset="0.53" stop-color="#ffea80"/><stop offset="0.60" stop-color="#ffda79"/><stop offset="1" stop-color="#ffd873"/></linearGradient></defs><path d="M0.5 20.5 L19.5 1.5 H123.0 Q125.0 1.5 125.0 3.5 V21 H0.5 Z" fill="url(#tg)"/><path d="M1.9 20 L20.3 2.6" stroke="#fff" stroke-width="0.9" fill="none"/><path d="M19.5 1.5 H123.0 Q125.0 1.5 125.0 3.5 V20" stroke="#7c7c7c" stroke-width="1" fill="none"/><path d="M0.6 20.1 L19.6 1.4" stroke="#505050" stroke-width="0.8" fill="none"/></svg>
<div class="t tab" style="left:394px;top:4px;height:17px;line-height:17px;color:#000;"><span style="transform:scaleX(1.0226)">Definitionen</span></div>
<svg class="i" style="left:471px;top:10px" width="8" height="7" shape-rendering="crispEdges"><path fill="#000" d="M0 0h2v1h-2zM6 0h2v1h-2zM1 1h2v1h-2zM5 1h2v1h-2zM2 2h4v1h-4zM3 3h2v1h-2zM2 4h4v1h-4zM1 5h2v1h-2zM5 5h2v1h-2zM0 6h2v1h-2zM6 6h2v1h-2z"/></svg>
<svg class="i" style="left:1025px;top:10px" width="9" height="5" shape-rendering="crispEdges"><path fill="#000" d="M0 0h9v1h-9zM1 1h7v1h-7zM2 2h5v1h-5zM3 3h3v1h-3zM4 4h1v1h-1z"/></svg>
<div style="left:364px;top:25px;width:672px;height:296px;background:#fff;border-left:2px solid #787878;border-top:2px solid #6e6e6e;box-sizing:border-box"></div>
<div style="left:364px;top:25px;width:671px;height:1px;background:#8c8c8c"></div>
<div style="left:1034px;top:27px;width:1px;height:296px;background:#e2e2e2"></div>
<div style="left:366px;top:27px;width:668px;height:9px;background:#fff"></div>
<div style="left:366px;top:36px;width:668px;height:13px;background:linear-gradient(#f5f5f7,#ececef)"></div>
<div style="left:366px;top:49px;width:668px;height:1px;background:#d2d2d2"></div>
<div style="left:366px;top:67px;width:668px;height:1px;background:#efefef"></div>
<div style="left:366px;top:84px;width:668px;height:1px;background:#efefef"></div>
<div style="left:366px;top:101px;width:668px;height:1px;background:#efefef"></div>
<div style="left:366px;top:118px;width:668px;height:1px;background:#efefef"></div>
<div style="left:366px;top:135px;width:668px;height:1px;background:#efefef"></div>
<div style="left:366px;top:152px;width:668px;height:1px;background:#efefef"></div>
<div style="left:366px;top:169px;width:668px;height:1px;background:#efefef"></div>
<div style="left:366px;top:186px;width:668px;height:1px;background:#efefef"></div>
<div style="left:366px;top:203px;width:668px;height:1px;background:#efefef"></div>
<div style="left:366px;top:220px;width:668px;height:1px;background:#efefef"></div>
<div style="left:366px;top:237px;width:668px;height:1px;background:#efefef"></div>
<div style="left:366px;top:254px;width:668px;height:1px;background:#efefef"></div>
<div style="left:366px;top:271px;width:668px;height:1px;background:#efefef"></div>
<div style="left:366px;top:288px;width:668px;height:1px;background:#efefef"></div>
<div style="left:366px;top:305px;width:668px;height:1px;background:#efefef"></div>
<div style="left:370px;top:68px;width:231px;height:16px;background:#efefef"></div>
<div style="left:366px;top:102px;width:235px;height:16px;background:#f9f9f9"></div>
<div style="left:499px;top:27px;width:1px;height:22px;background:#e3e3e6"></div>
<div style="left:500px;top:27px;width:1px;height:22px;background:#fbfbfd"></div>
<div style="left:500px;top:51px;width:1px;height:296px;background:#ececec"></div>
<div style="left:599px;top:27px;width:1px;height:22px;background:#e3e3e6"></div>
<div style="left:600px;top:27px;width:1px;height:22px;background:#fbfbfd"></div>
<div style="left:600px;top:51px;width:1px;height:296px;background:#ececec"></div>
<div class="t grid" style="left:370.5px;top:31px;height:16px;line-height:16px;color:#000;width:129px;overflow:hidden;"><span style="transform:scaleX(0.9951)">Name</span></div>
<div class="t grid" style="left:371.5px;top:52px;height:16px;line-height:16px;color:#000;width:128px;overflow:hidden;"><span style="transform:scaleX(0.9507)">FDT1_Semester 1v15</span></div>
<div class="t grid" style="left:371.5px;top:69px;height:16px;line-height:16px;color:#000;width:128px;overflow:hidden;"><span style="transform:scaleX(0.9497)">FDT2_Semester 2v15</span></div>
<div class="t grid" style="left:371.5px;top:86px;height:16px;line-height:16px;color:#000;width:128px;overflow:hidden;"><span style="transform:scaleX(0.9507)">FDT3_Semester 3v15</span></div>
<div class="t grid" style="left:371.5px;top:103px;height:16px;line-height:16px;color:#000;width:128px;overflow:hidden;"><span style="transform:scaleX(0.9507)">FDT4_Semester 4v15</span></div>
<div class="t grid" style="left:504.5px;top:31px;height:16px;line-height:16px;color:#000;width:95px;overflow:hidden;"><span style="transform:scaleX(1.0538)">Beschreibung</span></div>
<div class="t grid" style="left:505.5px;top:52px;height:16px;line-height:16px;color:#000;width:94px;overflow:hidden;"><span style="transform:scaleX(0.9451)">FDT1 Sem. 1 V ...</span></div>
<div class="t grid" style="left:505.5px;top:69px;height:16px;line-height:16px;color:#000;width:94px;overflow:hidden;"><span style="transform:scaleX(0.9451)">FDT2 Sem. 2 V ...</span></div>
<div class="t grid" style="left:505.5px;top:86px;height:16px;line-height:16px;color:#000;width:94px;overflow:hidden;"><span style="transform:scaleX(0.9451)">FDT3 Sem. 3 V ...</span></div>
<div class="t grid" style="left:505.5px;top:103px;height:16px;line-height:16px;color:#000;width:94px;overflow:hidden;"><span style="transform:scaleX(0.9451)">FDT4 Sem. 4 V ...</span></div>
<div style="left:1045px;top:1px;width:308px;height:19px;background:linear-gradient(#bccbdc,#d3e1ef)"></div>
<div class="t hdr" style="left:1048.5px;top:2px;height:19px;line-height:19px;color:#58647c;"><span style="transform:scaleX(1.0706)">Details</span></div>
<svg class="i" style="left:1322px;top:9px" width="9" height="5" shape-rendering="crispEdges"><path fill="#000" d="M0 0h9v1h-9zM1 1h7v1h-7zM2 2h5v1h-5zM3 3h3v1h-3zM4 4h1v1h-1z"/></svg>
<svg class="i" style="left:1339px;top:7px" width="8" height="7" shape-rendering="crispEdges"><path fill="#000" d="M0 0h2v1h-2zM6 0h2v1h-2zM1 1h2v1h-2zM5 1h2v1h-2zM2 2h4v1h-4zM3 3h2v1h-2zM2 4h4v1h-4zM1 5h2v1h-2zM5 5h2v1h-2zM0 6h2v1h-2zM6 6h2v1h-2z"/></svg>
<div style="left:1045px;top:20px;width:308px;height:1px;background:#eef1f8"></div>
<div style="left:1045px;top:21px;width:308px;height:23px;background:linear-gradient(#f6f6f6 0,#eeeeee 45%,#dedede 50%,#d6d6d6 100%);border:1px solid #686868;border-radius:3px;box-sizing:border-box"></div>
<div class="t combo" style="left:1048.5px;top:23px;height:21px;line-height:21px;color:#000;"><span style="transform:scaleX(1.0125)">Dokumentendaten</span></div>
<svg class="i" style="left:1341px;top:31px" width="7" height="4" shape-rendering="crispEdges"><path fill="#000" d="M0 0h7v1h-7zM1 1h5v1h-5zM2 2h3v1h-3zM3 3h1v1h-1z"/></svg>
<div style="left:1045px;top:44px;width:308px;height:23px;background:linear-gradient(#f5f6fc 0,#f0f2fa 30%,#e1e2ee 52%,#cfd0e0 72%,#b1b2cc 100%)"></div>
<svg class="i" style="left:1050px;top:48px" width="16" height="16"><use href="#ic_cat"/></svg>
<svg class="i" style="left:1072px;top:48px" width="16" height="16"><use href="#ic_az"/></svg>
<svg class="i" style="left:1102px;top:48px" width="16" height="16"><use href="#ic_refresh"/></svg>
<svg class="i" style="left:1124px;top:48px" width="16" height="16"><use href="#ic_save"/></svg>
<svg class="i" style="left:1146px;top:48px" width="16" height="16"><use href="#ic_edit"/></svg>
<svg class="i" style="left:1168px;top:48px" width="16" height="16"><use href="#ic_doc"/></svg>
<svg class="i" style="left:1190px;top:48px" width="16" height="16"><use href="#ic_copy"/></svg>
<svg class="i" style="left:1220px;top:48px" width="16" height="16"><use href="#ic_del"/></svg>
<div style="left:1095px;top:48px;width:1px;height:17px;background:#c4c5d2"></div>
<div style="left:1096px;top:49px;width:1px;height:17px;background:#f4f4fa;opacity:.6"></div>
<div style="left:1213px;top:48px;width:1px;height:17px;background:#c4c5d2"></div>
<div style="left:1214px;top:49px;width:1px;height:17px;background:#f4f4fa;opacity:.6"></div>
<div style="left:1045px;top:67px;width:308px;height:296px;background:#fff"></div>
<div style="left:1045px;top:67px;width:17px;height:153px;background:#efefef"></div>
<div style="left:1045px;top:67px;width:308px;height:17px;background:#efefef"></div>
<div class="eb2" style="left:1049px;top:70px"><div style="left:1px;top:3px;width:5px;height:1px;background:#4a62a8"></div></div>
<div class="t cat" style="left:1066px;top:67px;height:17px;line-height:17px;color:#686868;"><span style="transform:scaleX(1.2323)">Definition</span></div>
<div style="left:1062px;top:100px;width:291px;height:1px;background:#efefef"></div>
<div style="left:1199px;top:84px;width:1px;height:17px;background:#efefef"></div>
<div class="t prop" style="left:1066.2px;top:84px;height:16px;line-height:16px;color:#000;"><span style="transform:scaleX(0.9951)">Name</span></div>
<div class="t prop" style="left:1204px;top:84px;height:16px;line-height:16px;color:#000;width:149px;overflow:hidden;"><span style="transform:scaleX(0.9497)">FDT2_Semester 2v15</span></div>
<div style="left:1062px;top:117px;width:291px;height:1px;background:#efefef"></div>
<div style="left:1199px;top:101px;width:1px;height:17px;background:#efefef"></div>
<div class="t prop" style="left:1066.2px;top:101px;height:16px;line-height:16px;color:#000;"><span style="transform:scaleX(1.0538)">Beschreibung</span></div>
<div class="t prop" style="left:1204px;top:101px;height:16px;line-height:16px;color:#000;width:149px;overflow:hidden;"><span style="transform:scaleX(0.961)">FDT2 Sem. 2 V 2015/16</span></div>
<div style="left:1062px;top:134px;width:291px;height:1px;background:#efefef"></div>
<div style="left:1199px;top:118px;width:1px;height:17px;background:#efefef"></div>
<div class="t prop" style="left:1066.2px;top:118px;height:16px;line-height:16px;color:#838383;"><span style="transform:scaleX(1.0817)">Globale Funktionen</span></div>
<div class="t prop" style="left:1204px;top:118px;height:16px;line-height:16px;color:#838383;width:149px;overflow:hidden;"><span style="transform:scaleX(1.0596)">&lt;Text&gt;</span></div>
<div style="left:1062px;top:151px;width:291px;height:1px;background:#efefef"></div>
<div style="left:1199px;top:135px;width:1px;height:17px;background:#efefef"></div>
<div class="t prop" style="left:1066.2px;top:135px;height:16px;line-height:16px;color:#838383;"><span style="transform:scaleX(1.0833)">Variante</span></div>
<div class="t prop" style="left:1204px;top:135px;height:16px;line-height:16px;color:#838383;width:149px;overflow:hidden;"><span style="transform:scaleX(1.0428)">Dipl.Tech Textil</span></div>
<div style="left:1045px;top:152px;width:308px;height:17px;background:#efefef"></div>
<div class="eb2" style="left:1049px;top:155px"><div style="left:1px;top:3px;width:5px;height:1px;background:#4a62a8"></div></div>
<div class="t cat" style="left:1066px;top:152px;height:17px;line-height:17px;color:#686868;"><span style="transform:scaleX(1.2)">Information</span></div>
<div style="left:1062px;top:185px;width:291px;height:1px;background:#efefef"></div>
<div style="left:1199px;top:169px;width:1px;height:17px;background:#efefef"></div>
<div class="t prop" style="left:1066.2px;top:169px;height:16px;line-height:16px;color:#000;"><span style="transform:scaleX(1.0418)">Datensatz</span></div>
<div class="t prop" style="left:1204px;top:169px;height:16px;line-height:16px;color:#000;width:149px;overflow:hidden;"><span style="transform:scaleX(0.9266)">104</span></div>
<div style="left:1062px;top:202px;width:291px;height:1px;background:#efefef"></div>
<div style="left:1199px;top:186px;width:1px;height:17px;background:#efefef"></div>
<div class="t prop" style="left:1066.2px;top:186px;height:16px;line-height:16px;color:#000;"><span style="transform:scaleX(1.0498)">Erstellt</span></div>
<div class="t prop" style="left:1204px;top:186px;height:16px;line-height:16px;color:#000;width:149px;overflow:hidden;"><span style="transform:scaleX(0.9788)">29.10.2014 14:17:44</span></div>
<div style="left:1062px;top:219px;width:291px;height:1px;background:#efefef"></div>
<div style="left:1199px;top:203px;width:1px;height:17px;background:#efefef"></div>
<div class="t prop" style="left:1066.2px;top:203px;height:16px;line-height:16px;color:#000;"><span style="transform:scaleX(1.051)">Erstellt von</span></div>
</div></div>
<div class="win" style="left:112px;top:738px;width:1357px;height:621px">
<div class="org" style="left:4px;top:3px">
<div style="left:0px;top:-3px;width:1353px;height:621px;background:#ebecf9"></div>
<div style="left:0px;top:1px;width:2px;height:618px;background:#fbfbff"></div>
<div style="left:-4px;top:-3px;width:164px;height:1px;background:#fdfdfe"></div>
<div style="left:160px;top:-3px;width:4px;height:3px;background:#c1c2d7"></div>
<div style="left:-4px;top:-2px;width:166px;height:2px;background:#b7b8cf"></div>
<div style="left:-4px;top:0px;width:165px;height:1px;background:#9597af"></div>
<div style="left:161px;top:-2px;width:3px;height:2px;background:#c1c2d7"></div>
<div style="left:165px;top:0px;width:1188px;height:1px;background:#f4f5fc"></div>
<div style="left:-4px;top:5px;width:7px;height:20px;background:linear-gradient(90deg,#6c6c6c,#969696)"></div>
<div style="left:2px;top:25px;width:1px;height:618px;background:#9c9c9c"></div>
<div style="left:7px;top:20px;width:348px;height:618px;background:#f9f9fe"></div>
<div style="left:7px;top:1px;width:348px;height:19px;background:linear-gradient(#98b3d3,#b6cfe8)"></div>
<div class="t hdr" style="left:10.9px;top:2px;height:19px;line-height:19px;color:#000;"><span style="transform:scaleX(1.1445)">Notendefinitionen</span></div>
<svg class="i" style="left:324px;top:9px" width="9" height="5" shape-rendering="crispEdges"><path fill="#000" d="M0 0h9v1h-9zM1 1h7v1h-7zM2 2h5v1h-5zM3 3h3v1h-3zM4 4h1v1h-1z"/></svg>
<svg class="i" style="left:341px;top:7px" width="8" height="7" shape-rendering="crispEdges"><path fill="#000" d="M0 0h2v1h-2zM6 0h2v1h-2zM1 1h2v1h-2zM5 1h2v1h-2zM2 2h4v1h-4zM3 3h2v1h-2zM2 4h4v1h-4zM1 5h2v1h-2zM5 5h2v1h-2zM0 6h2v1h-2zM6 6h2v1h-2z"/></svg>
<div style="left:11px;top:25px;width:340px;height:24px;background:linear-gradient(#f4f6fc 0,#f0f2fa 30%,#e1e2ee 52%,#cfd0e0 72%,#b1b2cc 100%)"></div>
<div style="left:11px;top:49px;width:340px;height:618px;background:#fff;border:1px solid #6a6a6a;box-sizing:border-box"></div>
<div class="hd" style="left:29px;top:60px;width:6px;height:1px;"></div>
<div class="eb" style="left:19px;top:56px"><div style="left:1px;top:3px;width:5px;height:1px;background:#3c5a9e"></div></div>
<svg class="i" style="left:35px;top:51px" width="16" height="16"><use href="#ic_root"/></svg>
<div class="t tree" style="left:54.6px;top:50px;height:18px;line-height:18px;color:#000;"><span style="transform:scaleX(1.0301)">Abteilungen</span></div>
<div class="hd" style="left:48px;top:78px;width:5px;height:1px;"></div>
<div class="vd" style="left:42px;top:68px;width:1px;height:5px;"></div>
<div class="eb" style="left:38px;top:74px"><div style="left:1px;top:3px;width:5px;height:1px;background:#3c5a9e"></div><div style="left:3px;top:1px;width:1px;height:5px;background:#3c5a9e"></div></div>
<svg class="i" style="left:53px;top:69px" width="16" height="16"><use href="#ic_house"/></svg>
<div class="t tree" style="left:73.6px;top:68px;height:18px;line-height:18px;color:#000;"><span style="transform:scaleX(0.977)">Design</span></div>
<div class="hd" style="left:48px;top:96px;width:5px;height:1px;"></div>
<div class="vd" style="left:42px;top:84px;width:1px;height:7px;"></div>
<div class="eb" style="left:38px;top:92px"><div style="left:1px;top:3px;width:5px;height:1px;background:#3c5a9e"></div></div>
<svg class="i" style="left:53px;top:87px" width="16" height="16"><use href="#ic_house"/></svg>
<div class="t tree" style="left:73.6px;top:86px;height:18px;line-height:18px;color:#000;"><span style="transform:scaleX(0.9671)">Fashion</span></div>
<div class="hd" style="left:67px;top:114px;width:6px;height:1px;"></div>
<div class="vd" style="left:61px;top:104px;width:1px;height:5px;"></div>
<div class="eb" style="left:57px;top:110px"><div style="left:1px;top:3px;width:5px;height:1px;background:#3c5a9e"></div></div>
<svg class="i" style="left:73px;top:105px" width="16" height="16"><use href="#ic_cap"/></svg>
<div class="t tree" style="left:92.6px;top:104px;height:18px;line-height:18px;color:#000;"><span style="transform:scaleX(1.0019)">Dipl.Techniker HF Textil</span></div>
<div class="hd" style="left:86px;top:132px;width:5px;height:1px;"></div>
<div class="vd" style="left:80px;top:122px;width:1px;height:5px;"></div>
<div class="eb" style="left:76px;top:128px"><div style="left:1px;top:3px;width:5px;height:1px;background:#3c5a9e"></div><div style="left:3px;top:1px;width:1px;height:5px;background:#3c5a9e"></div></div>
<svg class="i" style="left:91px;top:123px" width="16" height="16"><use href="#ic_regl"/></svg>
<div class="t tree" style="left:111.6px;top:122px;height:18px;line-height:18px;color:#000;"><span style="transform:scaleX(0.9618)">136/137 Techn.Textil V2014-1 März 2014</span></div>
<div class="hd" style="left:86px;top:150px;width:5px;height:1px;"></div>
<div class="vd" style="left:80px;top:138px;width:1px;height:7px;"></div>
<div class="eb" style="left:76px;top:146px"><div style="left:1px;top:3px;width:5px;height:1px;background:#3c5a9e"></div><div style="left:3px;top:1px;width:1px;height:5px;background:#3c5a9e"></div></div>
<svg class="i" style="left:91px;top:141px" width="16" height="16"><use href="#ic_regl"/></svg>
<div class="t tree" style="left:111.6px;top:140px;height:18px;line-height:18px;color:#000;"><span style="transform:scaleX(0.9528)">136/137 Techn.Textil V6 14.08.2013</span></div>
<div class="hd" style="left:86px;top:168px;width:5px;height:1px;"></div>
<div class="vd" style="left:80px;top:156px;width:1px;height:7px;"></div>
<div class="eb" style="left:76px;top:164px"><div style="left:1px;top:3px;width:5px;height:1px;background:#3c5a9e"></div></div>
<svg class="i" style="left:91px;top:159px" width="16" height="16"><use href="#ic_regl"/></svg>
<div class="t tree" style="left:111.6px;top:158px;height:18px;line-height:18px;color:#000;"><span style="transform:scaleX(0.9784)">FDT Techn.Textil v15</span></div>
<div class="hd" style="left:105px;top:186px;width:5px;height:1px;"></div>
<div class="vd" style="left:99px;top:176px;width:1px;height:5px;"></div>
<div class="eb" style="left:95px;top:182px"><div style="left:1px;top:3px;width:5px;height:1px;background:#3c5a9e"></div></div>
<svg class="i" style="left:110px;top:177px" width="16" height="16"><use href="#ic_vari"/></svg>
<div class="t tree" style="left:130.6px;top:176px;height:18px;line-height:18px;color:#000;"><span style="transform:scaleX(1.0211)">Dipl.Tech Textil</span></div>
<div class="hd" style="left:120px;top:204px;width:10px;height:1px;"></div>
<div class="vd" style="left:118px;top:194px;width:1px;height:11px;"></div>
<svg class="i" style="left:130px;top:195px" width="16" height="16"><use href="#ic_defi"/></svg>
<div class="t tree" style="left:149.6px;top:194px;height:18px;line-height:18px;color:#000;"><span style="transform:scaleX(0.914)">FDT1_Semester 1v15</span></div>
<div class="hd" style="left:120px;top:222px;width:10px;height:1px;"></div>
<div class="vd" style="left:118px;top:206px;width:1px;height:17px;"></div>
<svg class="i" style="left:130px;top:213px" width="16" height="16"><use href="#ic_defi"/></svg>
<div class="sel" style="left:148px;top:212px;width:111px;height:18px;"></div>
<div class="t tree" style="left:149.6px;top:212px;height:18px;line-height:18px;color:#fff;"><span style="transform:scaleX(0.914)">FDT2_Semester 2v15</span></div>
<div class="hd" style="left:120px;top:240px;width:10px;height:1px;"></div>
<div class="vd" style="left:118px;top:224px;width:1px;height:17px;"></div>
<svg class="i" style="left:130px;top:231px" width="16" height="16"><use href="#ic_defi"/></svg>
<div class="t tree" style="left:149.6px;top:230px;height:18px;line-height:18px;color:#000;"><span style="transform:scaleX(0.914)">FDT3_Semester 3v15</span></div>
<div class="hd" style="left:120px;top:258px;width:10px;height:1px;"></div>
<div class="vd" style="left:118px;top:242px;width:1px;height:17px;"></div>
<svg class="i" style="left:130px;top:249px" width="16" height="16"><use href="#ic_defi"/></svg>
<div class="t tree" style="left:149.6px;top:248px;height:18px;line-height:18px;color:#000;"><span style="transform:scaleX(0.914)">FDT4_Semester 4v15</span></div>
<div class="hd" style="left:67px;top:276px;width:6px;height:1px;"></div>
<div class="vd" style="left:61px;top:120px;width:1px;height:151px;"></div>
<div class="eb" style="left:57px;top:272px"><div style="left:1px;top:3px;width:5px;height:1px;background:#3c5a9e"></div><div style="left:3px;top:1px;width:1px;height:5px;background:#3c5a9e"></div></div>
<svg class="i" style="left:73px;top:267px" width="16" height="16"><use href="#ic_cap"/></svg>
<div class="t tree" style="left:92.6px;top:266px;height:18px;line-height:18px;color:#000;"><span style="transform:scaleX(0.977)">Fashion Assistant</span></div>
<div class="hd" style="left:67px;top:294px;width:6px;height:1px;"></div>
<div class="vd" style="left:61px;top:282px;width:1px;height:7px;"></div>
<div class="eb" style="left:57px;top:290px"><div style="left:1px;top:3px;width:5px;height:1px;background:#3c5a9e"></div><div style="left:3px;top:1px;width:1px;height:5px;background:#3c5a9e"></div></div>
<svg class="i" style="left:73px;top:285px" width="16" height="16"><use href="#ic_cap"/></svg>
<div class="t tree" style="left:92.6px;top:284px;height:18px;line-height:18px;color:#000;"><span style="transform:scaleX(0.9793)">Fashiondesigner</span></div>
<div class="hd" style="left:48px;top:312px;width:5px;height:1px;"></div>
<div class="vd" style="left:42px;top:102px;width:1px;height:205px;"></div>
<div class="eb" style="left:38px;top:308px"><div style="left:1px;top:3px;width:5px;height:1px;background:#3c5a9e"></div><div style="left:3px;top:1px;width:1px;height:5px;background:#3c5a9e"></div></div>
<svg class="i" style="left:53px;top:303px" width="16" height="16"><use href="#ic_house"/></svg>
<div class="t tree" style="left:73.6px;top:302px;height:18px;line-height:18px;color:#000;"><span style="transform:scaleX(0.9799)">Lernende</span></div>
<div class="hd" style="left:48px;top:330px;width:5px;height:1px;"></div>
<div class="vd" style="left:42px;top:318px;width:1px;height:7px;"></div>
<div class="eb" style="left:38px;top:326px"><div style="left:1px;top:3px;width:5px;height:1px;background:#3c5a9e"></div><div style="left:3px;top:1px;width:1px;height:5px;background:#3c5a9e"></div></div>
<svg class="i" style="left:53px;top:321px" width="16" height="16"><use href="#ic_house"/></svg>
<div class="t tree" style="left:73.6px;top:320px;height:18px;line-height:18px;color:#000;"><span style="transform:scaleX(1.0268)">Marketing</span></div>
<div class="hd" style="left:48px;top:348px;width:5px;height:1px;"></div>
<div class="vd" style="left:42px;top:336px;width:1px;height:7px;"></div>
<div class="eb" style="left:38px;top:344px"><div style="left:1px;top:3px;width:5px;height:1px;background:#3c5a9e"></div><div style="left:3px;top:1px;width:1px;height:5px;background:#3c5a9e"></div></div>
<svg class="i" style="left:53px;top:339px" width="16" height="16"><use href="#ic_house"/></svg>
<div class="t tree" style="left:73.6px;top:338px;height:18px;line-height:18px;color:#000;"><span style="transform:scaleX(0.9821)">Textiles</span></div>
<div style="left:359px;top:1px;width:682px;height:618px;background:#f0f0f0;border:1px solid #9c9c9c;border-bottom:0;box-sizing:border-box"></div>
<div style="left:360px;top:21px;width:680px;height:1px;background:#a0a0a0"></div>
<div style="left:360px;top:22px;width:680px;height:618px;background:linear-gradient(90deg,#ffd873,#ffe27c 50%,#ffeb84)"></div>
<svg class="i" style="left:360px;top:2px" width="167" height="21"><defs><linearGradient id="tg" x1="0" y1="0" x2="0" y2="1"><stop offset="0.07" stop-color="#ffffff"/><stop offset="0.12" stop-color="#ffff8e"/><stop offset="0.46" stop-color="#ffff8a"/><stop offset="0.53" stop-color="#ffea80"/><stop offset="0.60" stop-color="#ffda79"/><stop offset="1" stop-color="#ffd873"/></linearGradient></defs><path d="M0.5 20.5 L19.5 1.5 H162.79999999999995 Q164.79999999999995 1.5 164.79999999999995 3.5 V21 H0.5 Z" fill="url(#tg)"/><path d="M1.9 20 L20.3 2.6" stroke="#fff" stroke-width="0.9" fill="none"/><path d="M19.5 1.5 H162.79999999999995 Q164.79999999999995 1.5 164.79999999999995 3.5 V20" stroke="#7c7c7c" stroke-width="1" fill="none"/><path d="M0.6 20.1 L19.6 1.4" stroke="#505050" stroke-width="0.8" fill="none"/></svg>
<div class="t tab" style="left:394px;top:4px;height:17px;line-height:17px;color:#000;"><span style="transform:scaleX(0.974)">Leistungsnachweise</span></div>
<svg class="i" style="left:511px;top:10px" width="8" height="7" shape-rendering="crispEdges"><path fill="#000" d="M0 0h2v1h-2zM6 0h2v1h-2zM1 1h2v1h-2zM5 1h2v1h-2zM2 2h4v1h-4zM3 3h2v1h-2zM2 4h4v1h-4zM1 5h2v1h-2zM5 5h2v1h-2zM0 6h2v1h-2zM6 6h2v1h-2z"/></svg>
<svg class="i" style="left:1025px;top:10px" width="9" height="5" shape-rendering="crispEdges"><path fill="#000" d="M0 0h9v1h-9zM1 1h7v1h-7zM2 2h5v1h-5zM3 3h3v1h-3zM4 4h1v1h-1z"/></svg>
<div style="left:364px;top:25px;width:672px;height:618px;background:#fff;border-left:2px solid #787878;border-top:2px solid #6e6e6e;box-sizing:border-box"></div>
<div style="left:364px;top:25px;width:671px;height:1px;background:#8c8c8c"></div>
<div style="left:1034px;top:27px;width:1px;height:618px;background:#e2e2e2"></div>
<div style="left:366px;top:27px;width:668px;height:9px;background:#fff"></div>
<div style="left:366px;top:36px;width:668px;height:13px;background:linear-gradient(#f5f5f7,#ececef)"></div>
<div style="left:366px;top:49px;width:668px;height:1px;background:#d2d2d2"></div>
<div style="left:366px;top:67px;width:668px;height:1px;background:#efefef"></div>
<div style="left:366px;top:84px;width:668px;height:1px;background:#efefef"></div>
<div style="left:366px;top:101px;width:668px;height:1px;background:#efefef"></div>
<div style="left:366px;top:118px;width:668px;height:1px;background:#efefef"></div>
<div style="left:366px;top:135px;width:668px;height:1px;background:#efefef"></div>
<div style="left:366px;top:152px;width:668px;height:1px;background:#efefef"></div>
<div style="left:366px;top:169px;width:668px;height:1px;background:#efefef"></div>
<div style="left:366px;top:186px;width:668px;height:1px;background:#efefef"></div>
<div style="left:366px;top:203px;width:668px;height:1px;background:#efefef"></div>
<div style="left:366px;top:220px;width:668px;height:1px;background:#efefef"></div>
<div style="left:366px;top:237px;width:668px;height:1px;background:#efefef"></div>
<div style="left:366px;top:254px;width:668px;height:1px;background:#efefef"></div>
<div style="left:366px;top:271px;width:668px;height:1px;background:#efefef"></div>
<div style="left:366px;top:288px;width:668px;height:1px;background:#efefef"></div>
<div style="left:366px;top:305px;width:668px;height:1px;background:#efefef"></div>
<div style="left:366px;top:322px;width:668px;height:1px;background:#efefef"></div>
<div style="left:366px;top:339px;width:668px;height:1px;background:#efefef"></div>
<div style="left:366px;top:356px;width:668px;height:1px;background:#efefef"></div>
<div style="left:366px;top:373px;width:668px;height:1px;background:#efefef"></div>
<div style="left:366px;top:390px;width:668px;height:1px;background:#efefef"></div>
<div style="left:366px;top:407px;width:668px;height:1px;background:#efefef"></div>
<div style="left:366px;top:424px;width:668px;height:1px;background:#efefef"></div>
<div style="left:366px;top:441px;width:668px;height:1px;background:#efefef"></div>
<div style="left:366px;top:458px;width:668px;height:1px;background:#efefef"></div>
<div style="left:366px;top:475px;width:668px;height:1px;background:#efefef"></div>
<div style="left:366px;top:492px;width:668px;height:1px;background:#efefef"></div>
<div style="left:366px;top:509px;width:668px;height:1px;background:#efefef"></div>
<div style="left:366px;top:526px;width:668px;height:1px;background:#efefef"></div>
<div style="left:366px;top:543px;width:668px;height:1px;background:#efefef"></div>
<div style="left:366px;top:560px;width:668px;height:1px;background:#efefef"></div>
<div style="left:366px;top:577px;width:668px;height:1px;background:#efefef"></div>
<div style="left:366px;top:594px;width:668px;height:1px;background:#efefef"></div>
<div style="left:366px;top:611px;width:668px;height:1px;background:#efefef"></div>
<div style="left:366px;top:628px;width:668px;height:1px;background:#efefef"></div>
<div style="left:366px;top:68px;width:668px;height:16px;background:#f9f9f9"></div>
<div style="left:370px;top:85px;width:664px;height:16px;background:#efefef"></div>
<div style="left:366px;top:102px;width:668px;height:16px;background:#f9f9f9"></div>
<div style="left:522px;top:27px;width:1px;height:22px;background:#e3e3e6"></div>
<div style="left:523px;top:27px;width:1px;height:22px;background:#fbfbfd"></div>
<div style="left:523px;top:51px;width:1px;height:618px;background:#ececec"></div>
<div style="left:622px;top:27px;width:1px;height:22px;background:#e3e3e6"></div>
<div style="left:623px;top:27px;width:1px;height:22px;background:#fbfbfd"></div>
<div style="left:623px;top:51px;width:1px;height:618px;background:#ececec"></div>
<div style="left:705px;top:27px;width:1px;height:22px;background:#e3e3e6"></div>
<div style="left:706px;top:27px;width:1px;height:22px;background:#fbfbfd"></div>
<div style="left:706px;top:51px;width:1px;height:618px;background:#ececec"></div>
<div style="left:805px;top:27px;width:1px;height:22px;background:#e3e3e6"></div>
<div style="left:806px;top:27px;width:1px;height:22px;background:#fbfbfd"></div>
<div style="left:806px;top:51px;width:1px;height:618px;background:#ececec"></div>
<div style="left:905px;top:27px;width:1px;height:22px;background:#e3e3e6"></div>
<div style="left:906px;top:27px;width:1px;height:22px;background:#fbfbfd"></div>
<div style="left:906px;top:51px;width:1px;height:618px;background:#ececec"></div>
<div style="left:1005px;top:27px;width:1px;height:22px;background:#e3e3e6"></div>
<div style="left:1006px;top:27px;width:1px;height:22px;background:#fbfbfd"></div>
<div style="left:1006px;top:51px;width:1px;height:618px;background:#ececec"></div>
<div class="t grid" style="left:370.5px;top:31px;height:16px;line-height:16px;color:#000;width:152px;overflow:hidden;"><span style="transform:scaleX(0.9951)">Name</span></div>
<div class="t grid" style="left:371.5px;top:52px;height:16px;line-height:16px;color:#000;width:151px;overflow:hidden;"><span style="transform:scaleX(1.0039)">FDT2_NotenübersichtJ1v15</span></div>
<div class="t grid" style="left:371.5px;top:69px;height:16px;line-height:16px;color:#000;width:151px;overflow:hidden;"><span style="transform:scaleX(1.0036)">FDT1_NotenübersichtS1v15</span></div>
<div class="t grid" style="left:371.5px;top:86px;height:16px;line-height:16px;color:#000;width:151px;overflow:hidden;"><span style="transform:scaleX(0.9748)">FDT2_Zeugnis Jahr 1v15</span></div>
<div class="t grid" style="left:371.5px;top:103px;height:16px;line-height:16px;color:#000;width:151px;overflow:hidden;"><span style="transform:scaleX(0.978)">FDT2_Zeugnis Jahr 1v15 Co...</span></div>
<div class="t grid" style="left:527.5px;top:31px;height:16px;line-height:16px;color:#000;width:95px;overflow:hidden;"><span style="transform:scaleX(1.0538)">Beschreibung</span></div>
<div class="t grid" style="left:528.5px;top:52px;height:16px;line-height:16px;color:#000;width:94px;overflow:hidden;"><span style="transform:scaleX(1.0218)">FDT2 Notenüb...</span></div>
<div class="t grid" style="left:528.5px;top:69px;height:16px;line-height:16px;color:#000;width:94px;overflow:hidden;"><span style="transform:scaleX(1.0218)">FDT1 Notenüb...</span></div>
<div class="t grid" style="left:528.5px;top:86px;height:16px;line-height:16px;color:#000;width:94px;overflow:hidden;"><span style="transform:scaleX(0.9712)">FDT2 Zeugnis J...</span></div>
<div class="t grid" style="left:528.5px;top:103px;height:16px;line-height:16px;color:#000;width:94px;overflow:hidden;"><span style="transform:scaleX(0.9712)">FDT2 Zeugnis J...</span></div>
<div class="t grid" style="left:627.5px;top:31px;height:16px;line-height:16px;color:#000;width:78px;overflow:hidden;"><span style="transform:scaleX(1.085)">Datenprüfu...</span></div>
<div class="t grid" style="left:710.5px;top:31px;height:16px;line-height:16px;color:#000;width:95px;overflow:hidden;"><span style="transform:scaleX(1.0497)">Ausgabetyp</span></div>
<div class="t grid" style="left:711.5px;top:52px;height:16px;line-height:16px;color:#000;width:94px;overflow:hidden;"><span style="transform:scaleX(1.077)">Word Auswert...</span></div>
<div class="t grid" style="left:711.5px;top:69px;height:16px;line-height:16px;color:#000;width:94px;overflow:hidden;"><span style="transform:scaleX(1.077)">Word Auswert...</span></div>
<div class="t grid" style="left:711.5px;top:86px;height:16px;line-height:16px;color:#000;width:94px;overflow:hidden;"><span style="transform:scaleX(1.077)">Word Auswert...</span></div>
<div class="t grid" style="left:711.5px;top:103px;height:16px;line-height:16px;color:#000;width:94px;overflow:hidden;"><span style="transform:scaleX(0.9885)">Email</span></div>
<div class="t grid" style="left:810.5px;top:31px;height:16px;line-height:16px;color:#000;width:95px;overflow:hidden;"><span style="transform:scaleX(1.0587)">Anzeigeformat</span></div>
<div class="t grid" style="left:811.5px;top:52px;height:16px;line-height:16px;color:#000;width:94px;overflow:hidden;"><span style="transform:scaleX(1.0525)">Standard</span></div>
<div class="t grid" style="left:811.5px;top:69px;height:16px;line-height:16px;color:#000;width:94px;overflow:hidden;"><span style="transform:scaleX(1.0525)">Standard</span></div>
<div class="t grid" style="left:811.5px;top:86px;height:16px;line-height:16px;color:#000;width:94px;overflow:hidden;"><span style="transform:scaleX(1.0525)">Standard</span></div>
<div class="t grid" style="left:811.5px;top:103px;height:16px;line-height:16px;color:#000;width:94px;overflow:hidden;"><span style="transform:scaleX(1.034)">Email mit Prüfu...</span></div>
<div class="t grid" style="left:910.5px;top:31px;height:16px;line-height:16px;color:#000;width:95px;overflow:hidden;"><span style="transform:scaleX(1.0637)">Archivierungsfo...</span></div>
<div class="t grid" style="left:911.5px;top:52px;height:16px;line-height:16px;color:#000;width:94px;overflow:hidden;"><span style="transform:scaleX(1.0525)">Standard</span></div>
<div class="t grid" style="left:911.5px;top:69px;height:16px;line-height:16px;color:#000;width:94px;overflow:hidden;"><span style="transform:scaleX(1.0525)">Standard</span></div>
<div class="t grid" style="left:911.5px;top:86px;height:16px;line-height:16px;color:#000;width:94px;overflow:hidden;"><span style="transform:scaleX(1.0525)">Standard</span></div>
<div class="t grid" style="left:911.5px;top:103px;height:16px;line-height:16px;color:#000;width:94px;overflow:hidden;"><span style="transform:scaleX(1.0525)">Standard</span></div>
<div class="t grid" style="left:1010.5px;top:31px;height:16px;line-height:16px;color:#000;width:23px;overflow:hidden;"><span style="transform:scaleX(0.9462)">Liste</span></div>
<div class="t grid" style="left:1011.5px;top:52px;height:16px;line-height:16px;color:#000;width:22px;overflow:hidden;"><span style="transform:scaleX(0.843)">Ja</span></div>
<div class="t grid" style="left:1011.5px;top:69px;height:16px;line-height:16px;color:#000;width:22px;overflow:hidden;"><span style="transform:scaleX(0.843)">Ja</span></div>
<div class="t grid" style="left:1011.5px;top:86px;height:16px;line-height:16px;color:#000;width:22px;overflow:hidden;"><span style="transform:scaleX(1.0829)">Nein</span></div>
<div class="t grid" style="left:1011.5px;top:103px;height:16px;line-height:16px;color:#000;width:22px;overflow:hidden;"><span style="transform:scaleX(1.0829)">Nein</span></div>
<div style="left:1045px;top:1px;width:308px;height:19px;background:linear-gradient(#bccbdc,#d3e1ef)"></div>
<div class="t hdr" style="left:1048.5px;top:2px;height:19px;line-height:19px;color:#58647c;"><span style="transform:scaleX(1.0706)">Details</span></div>
<svg class="i" style="left:1322px;top:9px" width="9" height="5" shape-rendering="crispEdges"><path fill="#000" d="M0 0h9v1h-9zM1 1h7v1h-7zM2 2h5v1h-5zM3 3h3v1h-3zM4 4h1v1h-1z"/></svg>
<svg class="i" style="left:1339px;top:7px" width="8" height="7" shape-rendering="crispEdges"><path fill="#000" d="M0 0h2v1h-2zM6 0h2v1h-2zM1 1h2v1h-2zM5 1h2v1h-2zM2 2h4v1h-4zM3 3h2v1h-2zM2 4h4v1h-4zM1 5h2v1h-2zM5 5h2v1h-2zM0 6h2v1h-2zM6 6h2v1h-2z"/></svg>
<div style="left:1045px;top:20px;width:308px;height:1px;background:#eef1f8"></div>
<div style="left:1045px;top:21px;width:308px;height:23px;background:linear-gradient(#f6f6f6 0,#eeeeee 45%,#dedede 50%,#d6d6d6 100%);border:1px solid #686868;border-radius:3px;box-sizing:border-box"></div>
<div class="t combo" style="left:1048.5px;top:23px;height:21px;line-height:21px;color:#000;"><span style="transform:scaleX(1.0125)">Dokumentendaten</span></div>
<svg class="i" style="left:1341px;top:31px" width="7" height="4" shape-rendering="crispEdges"><path fill="#000" d="M0 0h7v1h-7zM1 1h5v1h-5zM2 2h3v1h-3zM3 3h1v1h-1z"/></svg>
<div style="left:1045px;top:44px;width:308px;height:23px;background:linear-gradient(#f5f6fc 0,#f0f2fa 30%,#e1e2ee 52%,#cfd0e0 72%,#b1b2cc 100%)"></div>
<svg class="i" style="left:1050px;top:48px" width="16" height="16"><use href="#ic_cat"/></svg>
<svg class="i" style="left:1072px;top:48px" width="16" height="16"><use href="#ic_az"/></svg>
<svg class="i" style="left:1102px;top:48px" width="16" height="16"><use href="#ic_refresh"/></svg>
<svg class="i" style="left:1124px;top:48px" width="16" height="16"><use href="#ic_save"/></svg>
<svg class="i" style="left:1146px;top:48px" width="16" height="16"><use href="#ic_edit"/></svg>
<svg class="i" style="left:1168px;top:48px" width="16" height="16"><use href="#ic_doc"/></svg>
<svg class="i" style="left:1190px;top:48px" width="16" height="16"><use href="#ic_copy"/></svg>
<svg class="i" style="left:1220px;top:48px" width="16" height="16"><use href="#ic_del"/></svg>
<div style="left:1095px;top:48px;width:1px;height:17px;background:#c4c5d2"></div>
<div style="left:1096px;top:49px;width:1px;height:17px;background:#f4f4fa;opacity:.6"></div>
<div style="left:1213px;top:48px;width:1px;height:17px;background:#c4c5d2"></div>
<div style="left:1214px;top:49px;width:1px;height:17px;background:#f4f4fa;opacity:.6"></div>
<div style="left:1045px;top:67px;width:308px;height:618px;background:#fff"></div>
<div style="left:1045px;top:67px;width:17px;height:544px;background:#efefef"></div>
<div style="left:1045px;top:67px;width:308px;height:17px;background:#efefef"></div>
<div class="eb2" style="left:1049px;top:70px"><div style="left:1px;top:3px;width:5px;height:1px;background:#4a62a8"></div></div>
<div class="t cat" style="left:1066px;top:67px;height:17px;line-height:17px;color:#686868;"><span style="transform:scaleX(1.1283)">Leistungsnachweis</span></div>
<div style="left:1062px;top:100px;width:291px;height:1px;background:#efefef"></div>
<div style="left:1199px;top:84px;width:1px;height:17px;background:#efefef"></div>
<div class="t prop" style="left:1066.2px;top:84px;height:16px;line-height:16px;color:#000;"><span style="transform:scaleX(0.9951)">Name</span></div>
<div class="t prop" style="left:1204px;top:84px;height:16px;line-height:16px;color:#000;width:149px;overflow:hidden;"><span style="transform:scaleX(0.9748)">FDT2_Zeugnis Jahr 1v15</span></div>
<div style="left:1062px;top:117px;width:291px;height:1px;background:#efefef"></div>
<div style="left:1199px;top:101px;width:1px;height:17px;background:#efefef"></div>
<div class="t prop" style="left:1066.2px;top:101px;height:16px;line-height:16px;color:#000;"><span style="transform:scaleX(1.0538)">Beschreibung</span></div>
<div class="t prop" style="left:1204px;top:101px;height:16px;line-height:16px;color:#000;width:149px;overflow:hidden;"><span style="transform:scaleX(0.9875)">FDT2 Zeugnis Jahr 1 V 201...</span></div>
<div style="left:1062px;top:134px;width:291px;height:1px;background:#efefef"></div>
<div style="left:1199px;top:118px;width:1px;height:17px;background:#efefef"></div>
<div class="t prop" style="left:1066.2px;top:118px;height:16px;line-height:16px;color:#838383;"><span style="transform:scaleX(1.0497)">Ausgabetyp</span></div>
<div class="t prop" style="left:1204px;top:118px;height:16px;line-height:16px;color:#838383;width:149px;overflow:hidden;"><span style="transform:scaleX(1.0967)">Word Auswertung</span></div>
<div style="left:1062px;top:151px;width:291px;height:1px;background:#efefef"></div>
<div style="left:1199px;top:135px;width:1px;height:17px;background:#efefef"></div>
<div class="t prop" style="left:1066.2px;top:135px;height:16px;line-height:16px;color:#838383;"><span style="transform:scaleX(1.0692)">Listenauswertung</span></div>
<div class="t prop" style="left:1204px;top:135px;height:16px;line-height:16px;color:#838383;width:149px;overflow:hidden;"><span style="transform:scaleX(1.0829)">Nein</span></div>
<div style="left:1062px;top:168px;width:291px;height:1px;background:#efefef"></div>
<div style="left:1199px;top:152px;width:1px;height:17px;background:#efefef"></div>
<div class="t prop" style="left:1066.2px;top:152px;height:16px;line-height:16px;color:#838383;"><span style="transform:scaleX(1.0785)">Signatur</span></div>
<div class="t prop" style="left:1204px;top:152px;height:16px;line-height:16px;color:#838383;width:149px;overflow:hidden;"><span style="transform:scaleX(1.0829)">Nein</span></div>
<div style="left:1062px;top:185px;width:291px;height:1px;background:#efefef"></div>
<div style="left:1199px;top:169px;width:1px;height:17px;background:#efefef"></div>
<div class="t prop" style="left:1066.2px;top:169px;height:16px;line-height:16px;color:#838383;"><span style="transform:scaleX(1.0765)">Unterdrücken</span></div>
<div class="t prop" style="left:1204px;top:169px;height:16px;line-height:16px;color:#838383;width:149px;overflow:hidden;"><span style="transform:scaleX(1.0829)">Nein</span></div>
<div style="left:1062px;top:202px;width:291px;height:1px;background:#efefef"></div>
<div style="left:1199px;top:186px;width:1px;height:17px;background:#efefef"></div>
<div class="t prop" style="left:1066.2px;top:186px;height:16px;line-height:16px;color:#838383;"><span style="transform:scaleX(1.0587)">Anzeigeformat</span></div>
<div class="t prop" style="left:1204px;top:186px;height:16px;line-height:16px;color:#838383;width:149px;overflow:hidden;"><span style="transform:scaleX(1.0525)">Standard</span></div>
<div style="left:1062px;top:219px;width:291px;height:1px;background:#efefef"></div>
<div style="left:1199px;top:203px;width:1px;height:17px;background:#efefef"></div>
<div class="t prop" style="left:1066.2px;top:203px;height:16px;line-height:16px;color:#838383;"><span style="transform:scaleX(1.0631)">Archivierungsformat</span></div>
<div class="t prop" style="left:1204px;top:203px;height:16px;line-height:16px;color:#838383;width:149px;overflow:hidden;"><span style="transform:scaleX(1.0525)">Standard</span></div>
<div style="left:1062px;top:236px;width:291px;height:1px;background:#efefef"></div>
<div style="left:1199px;top:220px;width:1px;height:17px;background:#efefef"></div>
<div class="t prop" style="left:1066.2px;top:220px;height:16px;line-height:16px;color:#000;"><span style="transform:scaleX(1.0413)">Webname</span></div>
<div style="left:1062px;top:253px;width:291px;height:1px;background:#efefef"></div>
<div style="left:1199px;top:237px;width:1px;height:17px;background:#efefef"></div>
<div class="t prop" style="left:1066.2px;top:237px;height:16px;line-height:16px;color:#838383;"><span style="transform:scaleX(1.1295)">Definition</span></div>
<div class="t prop" style="left:1204px;top:237px;height:16px;line-height:16px;color:#838383;width:149px;overflow:hidden;"><span style="transform:scaleX(0.9497)">FDT2_Semester 2v15</span></div>
<div style="left:1045px;top:254px;width:308px;height:17px;background:#efefef"></div>
<div class="eb2" style="left:1049px;top:257px"><div style="left:1px;top:3px;width:5px;height:1px;background:#4a62a8"></div></div>
<div class="t cat" style="left:1066px;top:254px;height:17px;line-height:17px;color:#686868;"><span style="transform:scaleX(1.1991)">Vorlage</span></div>
<div style="left:1062px;top:287px;width:291px;height:1px;background:#efefef"></div>
<div style="left:1199px;top:271px;width:1px;height:17px;background:#efefef"></div>
<div class="t prop" style="left:1066.2px;top:271px;height:16px;line-height:16px;color:#838383;"><span style="transform:scaleX(1.1129)">Datenprüfung</span></div>
<div class="t prop" style="left:1204px;top:271px;height:16px;line-height:16px;color:#838383;width:149px;overflow:hidden;"><span style="transform:scaleX(1.0596)">&lt;Text&gt;</span></div>
<div style="left:1062px;top:304px;width:291px;height:1px;background:#efefef"></div>
<div style="left:1199px;top:288px;width:1px;height:17px;background:#efefef"></div>
<div class="t prop" style="left:1066.2px;top:288px;height:16px;line-height:16px;color:#838383;"><span style="transform:scaleX(1.0488)">Globaler Code</span></div>
<div class="t prop" style="left:1204px;top:288px;height:16px;line-height:16px;color:#838383;width:149px;overflow:hidden;"><span style="transform:scaleX(1.0596)">&lt;Text&gt;</span></div>
<div style="left:1062px;top:321px;width:291px;height:1px;background:#efefef"></div>
<div style="left:1199px;top:305px;width:1px;height:17px;background:#efefef"></div>
<div class="t prop" style="left:1066.2px;top:305px;height:16px;line-height:16px;color:#838383;"><span style="transform:scaleX(1.061)">Kopfvorlage</span></div>
<div class="t prop" style="left:1204px;top:305px;height:16px;line-height:16px;color:#838383;width:149px;overflow:hidden;"><span style="transform:scaleX(0.9814)">&lt;RTF Text&gt;</span></div>
<div style="left:1062px;top:338px;width:291px;height:1px;background:#efefef"></div>
<div style="left:1199px;top:322px;width:1px;height:17px;background:#efefef"></div>
<div class="t prop" style="left:1066.2px;top:322px;height:16px;line-height:16px;color:#838383;"><span style="transform:scaleX(1.0629)">Kopfvorlage von</span></div>
<div style="left:1062px;top:355px;width:291px;height:1px;background:#efefef"></div>
<div style="left:1199px;top:339px;width:1px;height:17px;background:#efefef"></div>
<div class="t prop" style="left:1066.2px;top:339px;height:16px;line-height:16px;color:#838383;"><span style="transform:scaleX(1.1039)">Kopf integriert</span></div>
<div class="t prop" style="left:1204px;top:339px;height:16px;line-height:16px;color:#838383;width:149px;overflow:hidden;"><span style="transform:scaleX(1.0829)">Nein</span></div>
<div style="left:1062px;top:372px;width:291px;height:1px;background:#efefef"></div>
<div style="left:1199px;top:356px;width:1px;height:17px;background:#efefef"></div>
<div class="t prop" style="left:1066.2px;top:356px;height:16px;line-height:16px;color:#838383;"><span style="transform:scaleX(1.0854)">Vorlage</span></div>
<div class="t prop" style="left:1204px;top:356px;height:16px;line-height:16px;color:#838383;width:149px;overflow:hidden;"><span style="transform:scaleX(0.9814)">&lt;RTF Text&gt;</span></div>
<div style="left:1062px;top:389px;width:291px;height:1px;background:#efefef"></div>
<div style="left:1199px;top:373px;width:1px;height:17px;background:#efefef"></div>
<div class="t prop" style="left:1066.2px;top:373px;height:16px;line-height:16px;color:#838383;"><span style="transform:scaleX(1.0034)">Excelvorlage</span></div>
<div class="t prop" style="left:1204px;top:373px;height:16px;line-height:16px;color:#838383;width:149px;overflow:hidden;"><span style="transform:scaleX(1.0596)">&lt;Text&gt;</span></div>
<div style="left:1062px;top:406px;width:291px;height:1px;background:#efefef"></div>
<div style="left:1199px;top:390px;width:1px;height:17px;background:#efefef"></div>
<div class="t prop" style="left:1066.2px;top:390px;height:16px;line-height:16px;color:#838383;"><span style="transform:scaleX(1.0729)">Makrovorlage</span></div>
<div class="t prop" style="left:1204px;top:390px;height:16px;line-height:16px;color:#838383;width:149px;overflow:hidden;"><span style="transform:scaleX(1.0596)">&lt;Text&gt;</span></div>
<div style="left:1062px;top:423px;width:291px;height:1px;background:#efefef"></div>
<div style="left:1199px;top:407px;width:1px;height:17px;background:#efefef"></div>
<div class="t prop" style="left:1066.2px;top:407px;height:16px;line-height:16px;color:#838383;"><span style="transform:scaleX(1.1172)">Weiterleitung</span></div>
<div style="left:1062px;top:440px;width:291px;height:1px;background:#efefef"></div>
<div style="left:1199px;top:424px;width:1px;height:17px;background:#efefef"></div>
<div class="t prop" style="left:1066.2px;top:424px;height:16px;line-height:16px;color:#838383;"><span style="transform:scaleX(1.0547)">Konvertierungscode</span></div>
<div class="t prop" style="left:1204px;top:424px;height:16px;line-height:16px;color:#838383;width:149px;overflow:hidden;"><span style="transform:scaleX(1.0596)">&lt;Text&gt;</span></div>
<div style="left:1062px;top:457px;width:291px;height:1px;background:#efefef"></div>
<div style="left:1199px;top:441px;width:1px;height:17px;background:#efefef"></div>
<div class="t prop" style="left:1066.2px;top:441px;height:16px;line-height:16px;color:#838383;"><span style="transform:scaleX(1.0628)">Nachverarbeitung</span></div>
<div class="t prop" style="left:1204px;top:441px;height:16px;line-height:16px;color:#838383;width:149px;overflow:hidden;"><span style="transform:scaleX(1.0829)">Nein</span></div>
<div style="left:1062px;top:474px;width:291px;height:1px;background:#efefef"></div>
<div style="left:1199px;top:458px;width:1px;height:17px;background:#efefef"></div>
<div class="t prop" style="left:1066.2px;top:458px;height:16px;line-height:16px;color:#838383;"><span style="transform:scaleX(1.0543)">Nachverarbeitungscode</span></div>
<div class="t prop" style="left:1204px;top:458px;height:16px;line-height:16px;color:#838383;width:149px;overflow:hidden;"><span style="transform:scaleX(1.0596)">&lt;Text&gt;</span></div>
<div style="left:1045px;top:475px;width:308px;height:17px;background:#efefef"></div>
<div class="eb2" style="left:1049px;top:478px"><div style="left:1px;top:3px;width:5px;height:1px;background:#4a62a8"></div></div>
<div class="t cat" style="left:1066px;top:475px;height:17px;line-height:17px;color:#686868;"><span style="transform:scaleX(1.2)">Information</span></div>
<div style="left:1062px;top:508px;width:291px;height:1px;background:#efefef"></div>
<div style="left:1199px;top:492px;width:1px;height:17px;background:#efefef"></div>
<div class="t prop" style="left:1066.2px;top:492px;height:16px;line-height:16px;color:#000;"><span style="transform:scaleX(1.0418)">Datensatz</span></div>
<div class="t prop" style="left:1204px;top:492px;height:16px;line-height:16px;color:#000;width:149px;overflow:hidden;"><span style="transform:scaleX(0.9804)">233</span></div>
<div style="left:1062px;top:525px;width:291px;height:1px;background:#efefef"></div>
<div style="left:1199px;top:509px;width:1px;height:17px;background:#efefef"></div>
<div class="t prop" style="left:1066.2px;top:509px;height:16px;line-height:16px;color:#000;"><span style="transform:scaleX(1.0498)">Erstellt</span></div>
<div class="t prop" style="left:1204px;top:509px;height:16px;line-height:16px;color:#000;width:149px;overflow:hidden;"><span style="transform:scaleX(0.9808)">10.01.2013 15:20:48</span></div>
<div style="left:1062px;top:542px;width:291px;height:1px;background:#efefef"></div>
<div style="left:1199px;top:526px;width:1px;height:17px;background:#efefef"></div>
<div class="t prop" style="left:1066.2px;top:526px;height:16px;line-height:16px;color:#000;"><span style="transform:scaleX(1.051)">Erstellt von</span></div>
<div class="t prop" style="left:1204px;top:526px;height:16px;line-height:16px;color:#000;width:149px;overflow:hidden;"><span style="transform:scaleX(1.0109)">smtUser</span></div>
<div style="left:1062px;top:559px;width:291px;height:1px;background:#efefef"></div>
<div style="left:1199px;top:543px;width:1px;height:17px;background:#efefef"></div>
<div class="t prop" style="left:1066.2px;top:543px;height:16px;line-height:16px;color:#000;"><span style="transform:scaleX(1.0572)">Geändert</span></div>
<div class="t prop" style="left:1204px;top:543px;height:16px;line-height:16px;color:#000;width:149px;overflow:hidden;"><span style="transform:scaleX(0.9888)">18.11.2015 10:25:23</span></div>
<div style="left:1062px;top:576px;width:291px;height:1px;background:#efefef"></div>
<div style="left:1199px;top:560px;width:1px;height:17px;background:#efefef"></div>
<div class="t prop" style="left:1066.2px;top:560px;height:16px;line-height:16px;color:#000;"><span style="transform:scaleX(1.0752)">Aktualisiert von</span></div>
<div class="t prop" style="left:1204px;top:560px;height:16px;line-height:16px;color:#000;width:149px;overflow:hidden;"><span style="transform:scaleX(0.9634)">sa</span></div>
<div style="left:1062px;top:593px;width:291px;height:1px;background:#efefef"></div>
<div style="left:1199px;top:577px;width:1px;height:17px;background:#efefef"></div>
<div class="t prop" style="left:1066.2px;top:577px;height:16px;line-height:16px;color:#838383;"><span style="transform:scaleX(1.0696)">Verbergen</span></div>
<div class="t prop" style="left:1204px;top:577px;height:16px;line-height:16px;color:#838383;width:149px;overflow:hidden;"><span style="transform:scaleX(1.0829)">Nein</span></div>
<div style="left:1045px;top:594px;width:308px;height:17px;background:#efefef"></div>
<div class="eb2" style="left:1049px;top:597px"><div style="left:1px;top:3px;width:5px;height:1px;background:#4a62a8"></div><div style="left:3px;top:1px;width:1px;height:5px;background:#4a62a8"></div></div>
<div class="t cat" style="left:1066px;top:594px;height:17px;line-height:17px;color:#686868;"><span style="transform:scaleX(1.1836)">Benutzerdefinierte Felder</span></div>
<div style="left:1062px;top:627px;width:291px;height:1px;background:#efefef"></div>
<div style="left:1199px;top:611px;width:1px;height:17px;background:#efefef"></div>
</div></div>
</body></html>
